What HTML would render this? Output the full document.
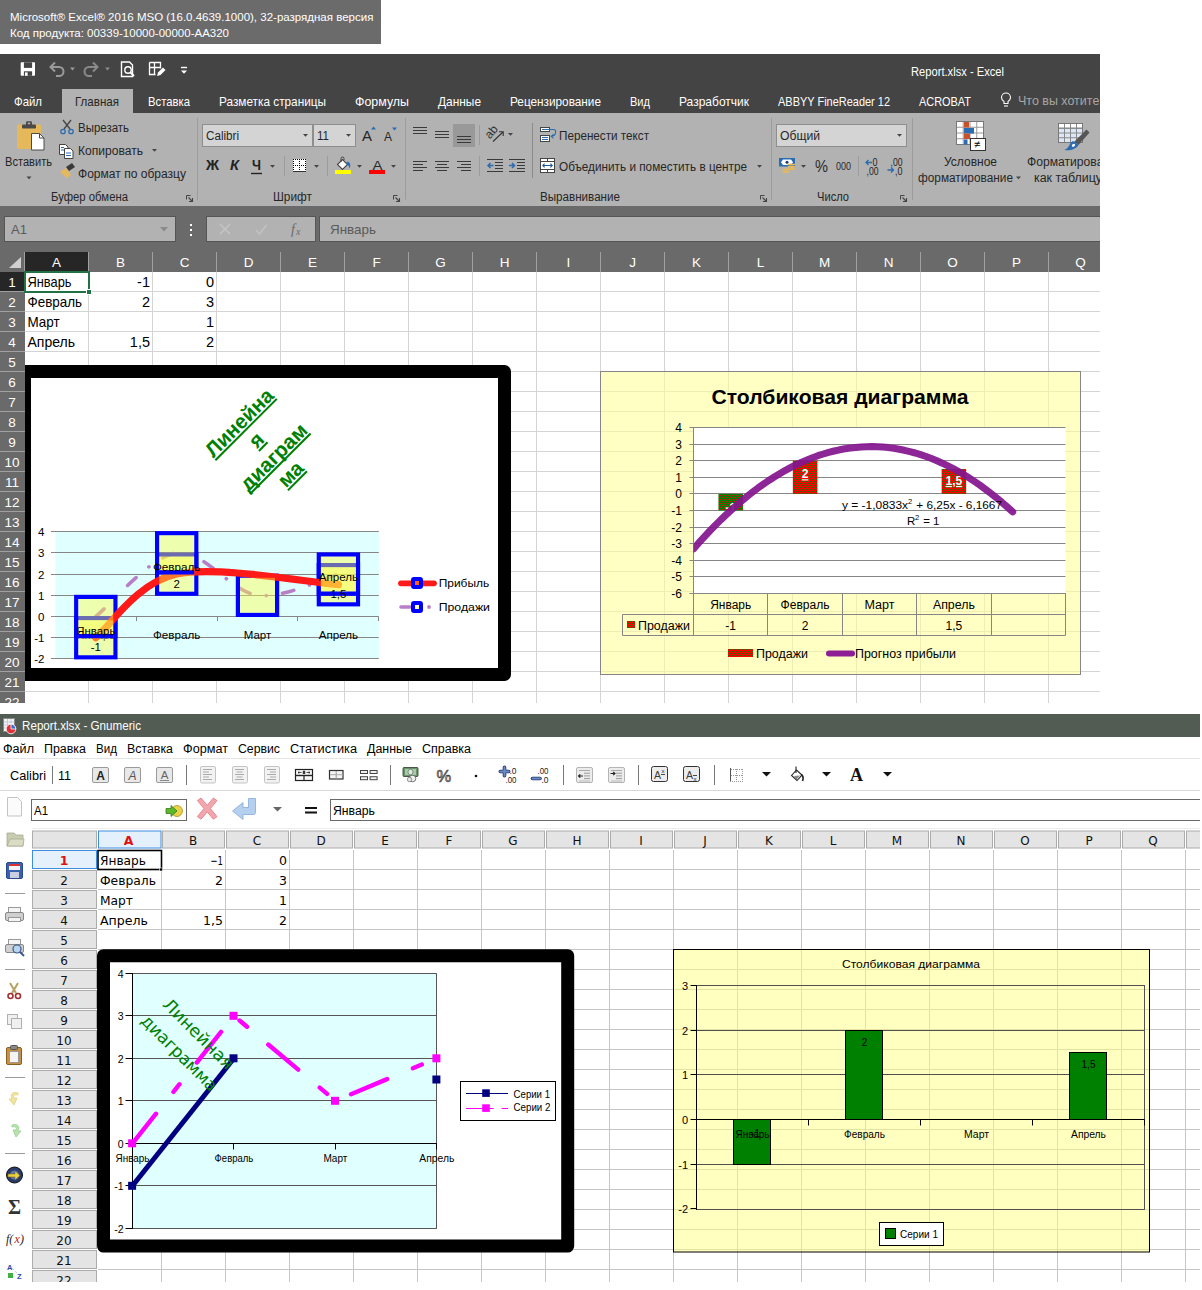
<!DOCTYPE html>
<html lang="ru"><head><meta charset="utf-8"><title>Report.xlsx</title>
<style>
html,body{margin:0;padding:0;background:#fff;}
body{width:1202px;height:1290px;position:relative;overflow:hidden;font-family:"Liberation Sans", sans-serif;}
#ver{position:absolute;left:0;top:0;width:381px;height:44px;background:#6b6b6b;color:#fff;font-size:11.5px;line-height:16px;box-sizing:border-box;padding:9px 0 0 10px;white-space:nowrap;}
#excel{position:absolute;left:0;top:54px;width:1100px;height:649px;overflow:hidden;}
#gnumeric{position:absolute;left:0;top:714px;width:1200px;height:568px;overflow:hidden;}
svg{display:block;}
text{white-space:pre;}
</style></head><body>
<div id="ver"><div>Microsoft® Excel® 2016 MSO (16.0.4639.1000), 32-разрядная версия</div><div>Код продукта: 00339-10000-00000-AA320</div></div>
<div id="excel"><svg width="1100" height="649" viewBox="0 54 1100 649">
<rect x="0" y="54" width="1100" height="59" fill="#444444" />
<rect x="20.7" y="62.3" width="14.3" height="13.5" fill="#fff" rx="0.800"/>
<rect x="23.9" y="62.3" width="8.2" height="5.6" fill="#444" />
<rect x="23.9" y="71.3" width="8.2" height="4.5" fill="#444" />
<rect x="25" y="72.4" width="2.6" height="3.4" fill="#fff" />
<path d="M51 67h8a4.500 4.500 0 0 1 0 9h-3" fill="none" stroke="#9a9a9a" stroke-width="2" />
<path d="M55 62.500l-4.500 4.500l4.500 4.500" fill="none" stroke="#9a9a9a" stroke-width="2" />
<path d="M70 67.500h5l-2.500 3z" fill="#9a9a9a" />
<path d="M97 67h-8a4.500 4.500 0 0 0 0 9h3" fill="none" stroke="#8a8a8a" stroke-width="2" />
<path d="M93 62.500l4.500 4.500l-4.500 4.500" fill="none" stroke="#8a8a8a" stroke-width="2" />
<path d="M105 67.500h5l-2.500 3z" fill="#8a8a8a" />
<path d="M121.5 62h8l3 3v11.5h-11z" fill="none" stroke="#fff" stroke-width="1.4" />
<circle cx="128" cy="70" r="3.2" fill="none" stroke="#fff" stroke-width="1.4"/>
<line x1="130.5" y1="72.5" x2="134" y2="76" stroke="#fff" stroke-width="1.8" />
<path d="M149.500 62.500h11v6 M149.500 62.500v12h6 M149.500 67.500h11 M154.500 62.500v12" fill="none" stroke="#fff" stroke-width="1.3" />
<path d="M157 76l1-3.500l5-5l2.500 2.500l-5 5z" fill="#fff" />
<line x1="181" y1="67.5" x2="187" y2="67.5" stroke="#fff" stroke-width="1.4" />
<path d="M181 70.500h6l-3 3.200z" fill="#fff" />
<text x="911" y="76" font-size="12" fill="#fff" font-family='"Liberation Sans", sans-serif' textLength="93" lengthAdjust="spacingAndGlyphs" >Report.xlsx - Excel</text>
<rect x="62" y="89" width="71" height="24" fill="#b2b2b2" />
<text x="14" y="105.5" font-size="13" fill="#fff" font-family='"Liberation Sans", sans-serif' textLength="28" lengthAdjust="spacingAndGlyphs" >Файл</text>
<text x="75" y="105.5" font-size="13" fill="#262626" font-family='"Liberation Sans", sans-serif' textLength="44" lengthAdjust="spacingAndGlyphs" >Главная</text>
<text x="148" y="105.5" font-size="13" fill="#fff" font-family='"Liberation Sans", sans-serif' textLength="42" lengthAdjust="spacingAndGlyphs" >Вставка</text>
<text x="219" y="105.5" font-size="13" fill="#fff" font-family='"Liberation Sans", sans-serif' textLength="107" lengthAdjust="spacingAndGlyphs" >Разметка страницы</text>
<text x="355" y="105.5" font-size="13" fill="#fff" font-family='"Liberation Sans", sans-serif' textLength="54" lengthAdjust="spacingAndGlyphs" >Формулы</text>
<text x="438" y="105.5" font-size="13" fill="#fff" font-family='"Liberation Sans", sans-serif' textLength="43" lengthAdjust="spacingAndGlyphs" >Данные</text>
<text x="510" y="105.5" font-size="13" fill="#fff" font-family='"Liberation Sans", sans-serif' textLength="91" lengthAdjust="spacingAndGlyphs" >Рецензирование</text>
<text x="630" y="105.5" font-size="13" fill="#fff" font-family='"Liberation Sans", sans-serif' textLength="20" lengthAdjust="spacingAndGlyphs" >Вид</text>
<text x="679" y="105.5" font-size="13" fill="#fff" font-family='"Liberation Sans", sans-serif' textLength="70" lengthAdjust="spacingAndGlyphs" >Разработчик</text>
<text x="778" y="105.5" font-size="13" fill="#fff" font-family='"Liberation Sans", sans-serif' textLength="112" lengthAdjust="spacingAndGlyphs" >ABBYY FineReader 12</text>
<text x="919" y="105.5" font-size="13" fill="#fff" font-family='"Liberation Sans", sans-serif' textLength="52" lengthAdjust="spacingAndGlyphs" >ACROBAT</text>
<g fill="none" stroke="#fff" stroke-width="1.1"><path d="M1004 103.500v-2c-1.500-1-2.500-2.300-2.500-4a4.500 4.500 0 0 1 9 0c0 1.700-1 3-2.500 4v2z"/><path d="M1004 106h4"/></g>
<clipPath id="xclip"><rect x="0" y="54" width="1100" height="649"/></clipPath>
<text x="1018" y="105" font-size="13" fill="#a6a6a6" font-family='"Liberation Sans", sans-serif' textLength="131" lengthAdjust="spacingAndGlyphs" clip-path="url(#xclip)">Что вы хотите сделать</text>
<rect x="0" y="113" width="1100" height="93" fill="#b2b2b2" />
<line x1="197.5" y1="118" x2="197.5" y2="200" stroke="#9c9c9c" stroke-width="1" />
<line x1="405.5" y1="118" x2="405.5" y2="200" stroke="#9c9c9c" stroke-width="1" />
<line x1="771.5" y1="118" x2="771.5" y2="200" stroke="#9c9c9c" stroke-width="1" />
<line x1="912.5" y1="118" x2="912.5" y2="200" stroke="#9c9c9c" stroke-width="1" />
<line x1="532.5" y1="123" x2="532.5" y2="178" stroke="#8c8c8c" stroke-width="1" />
<line x1="327.5" y1="156" x2="327.5" y2="176" stroke="#9c9c9c" stroke-width="1" />
<line x1="284.5" y1="156" x2="284.5" y2="176" stroke="#9c9c9c" stroke-width="1" />
<line x1="479.5" y1="125" x2="479.5" y2="145" stroke="#9c9c9c" stroke-width="1" />
<line x1="479.5" y1="156" x2="479.5" y2="176" stroke="#9c9c9c" stroke-width="1" />
<line x1="858.5" y1="156" x2="858.5" y2="176" stroke="#9c9c9c" stroke-width="1" />
<rect x="17" y="124.5" width="24" height="24.5" fill="#e6b85c" rx="1.500"/>
<rect x="22" y="124.5" width="14" height="4" fill="#4a4a4a" rx="1"/>
<rect x="26" y="121.3" width="6" height="4.5" fill="#4a4a4a" rx="1.200"/>
<rect x="27.8" y="122.6" width="2.4" height="1.6" fill="#b2b2b2" />
<path d="M31.500 133.500h8l4.500 4.500v12h-12.500z" fill="#fff" stroke="#4a4a4a" stroke-width="1" />
<path d="M39.500 133.500v4.500h4.500" fill="none" stroke="#4a4a4a" stroke-width="1" />
<text x="5" y="165.5" font-size="12.5" fill="#262626" font-family='"Liberation Sans", sans-serif' textLength="47" lengthAdjust="spacingAndGlyphs" >Вставить</text>
<path d="M26.500 176.500h5l-2.500 2.800z" fill="#444" />
<path d="M63 120l7 9 M71 120l-7 9" fill="none" stroke="#444" stroke-width="1.3" />
<circle cx="63" cy="131.500" r="2.200" fill="none" stroke="#2b6cb0" stroke-width="1.300"/><circle cx="71" cy="131.500" r="2.200" fill="none" stroke="#2b6cb0" stroke-width="1.300"/>
<text x="78" y="131.5" font-size="12.5" fill="#262626" font-family='"Liberation Sans", sans-serif' textLength="51" lengthAdjust="spacingAndGlyphs" >Вырезать</text>
<path d="M59.500 144.500h6l2.500 2.500v7.500h-8.500z" fill="#fff" stroke="#444" stroke-width="1" />
<path d="M64.500 148.500h6l2.500 2.500v7.500h-8.500z" fill="#fff" stroke="#444" stroke-width="1" />
<path d="M61 147.500h3 M61 150h3 M66 153h5 M66 155.500h5" fill="none" stroke="#2b6cb0" stroke-width="1" />
<text x="78" y="154.5" font-size="12.5" fill="#262626" font-family='"Liberation Sans", sans-serif' textLength="65" lengthAdjust="spacingAndGlyphs" >Копировать</text>
<path d="M152 149h5l-2.500 2.800z" fill="#444" />
<path d="M60 172l6-4l5 7l-4 3z" fill="#e6b85c" />
<path d="M66 167l6-4l3 4l-6 4z" fill="#3a3a3a" />
<text x="78" y="177.5" font-size="12.5" fill="#262626" font-family='"Liberation Sans", sans-serif' textLength="108" lengthAdjust="spacingAndGlyphs" >Формат по образцу</text>
<text x="51" y="201.2" font-size="12" fill="#262626" font-family='"Liberation Sans", sans-serif' textLength="77" lengthAdjust="spacingAndGlyphs" >Буфер обмена</text>
<path d="M186.5 199.5v-4h4" fill="none" stroke="#444" stroke-width="1" />
<path d="M188.5 197.5l3.500 3.500 M192.5 198v3.500h-3.500" fill="none" stroke="#444" stroke-width="1.1" />
<rect x="202.5" y="124.5" width="110" height="22" fill="#d4d4d4" stroke="#8e8e8e" stroke-width="1" />
<rect x="313.5" y="124.5" width="42" height="22" fill="#d4d4d4" stroke="#8e8e8e" stroke-width="1" />
<text x="206" y="139.5" font-size="12.5" fill="#262626" font-family='"Liberation Sans", sans-serif' textLength="33" lengthAdjust="spacingAndGlyphs" >Calibri</text>
<text x="317" y="139.5" font-size="12.5" fill="#262626" font-family='"Liberation Sans", sans-serif' textLength="12" lengthAdjust="spacingAndGlyphs" >11</text>
<path d="M303 134h5l-2.500 2.800z" fill="#444" />
<path d="M346 134h5l-2.500 2.800z" fill="#444" />
<text x="362" y="141" font-size="15" fill="#262626" font-family='"Liberation Sans", sans-serif' textLength="10" lengthAdjust="spacingAndGlyphs" >A</text>
<path d="M371 129.500l2.500-3l2.500 3z" fill="#2b6cb0" />
<text x="384" y="140.5" font-size="12" fill="#262626" font-family='"Liberation Sans", sans-serif' textLength="8" lengthAdjust="spacingAndGlyphs" >A</text>
<path d="M392 127.500h5l-2.500 3z" fill="#2b6cb0" />
<text x="206" y="170" font-size="14" fill="#222" font-family='"Liberation Sans", sans-serif' font-weight="bold" textLength="13" lengthAdjust="spacingAndGlyphs" >Ж</text>
<text x="230" y="170" font-size="14" fill="#222" font-family='"Liberation Sans", sans-serif' font-weight="bold" font-style="italic" textLength="9" lengthAdjust="spacingAndGlyphs" >К</text>
<text x="252" y="170" font-size="14" fill="#222" font-family='"Liberation Sans", sans-serif' font-weight="bold" textLength="9" lengthAdjust="spacingAndGlyphs" >Ч</text>
<line x1="251" y1="173.5" x2="262" y2="173.5" stroke="#222" stroke-width="1.4" />
<path d="M270 165h5l-2.500 2.800z" fill="#444" />
<rect x="293" y="159" width="13" height="13" fill="#fff" />
<g shape-rendering="crispEdges" stroke="#333" stroke-width="1" stroke-dasharray="1 1">
<line x1="293.5" y1="159" x2="293.5" y2="171" stroke="#000" stroke-width="1" />
<line x1="305.5" y1="159" x2="305.5" y2="171" stroke="#000" stroke-width="1" />
<line x1="299.5" y1="159" x2="299.5" y2="171" stroke="#000" stroke-width="1" />
<line x1="293" y1="159.5" x2="306" y2="159.5" stroke="#000" stroke-width="1" />
<line x1="293" y1="165.5" x2="306" y2="165.5" stroke="#000" stroke-width="1" />
</g>
<line x1="293" y1="171.5" x2="306" y2="171.5" stroke="#333" stroke-width="1" shape-rendering="crispEdges"/>
<path d="M314 165h5l-2.500 2.800z" fill="#444" />
<path d="M337.500 164.500l5-5l5 5l-5 5z" fill="#fff" stroke="#444" stroke-width="1.1" />
<path d="M341 162v-3.500a1.500 1.500 0 0 1 3 0v1.500" fill="none" stroke="#444" stroke-width="1" />
<path d="M347.500 161.500c3 1 3.500 4 2 7c-0.500-2.500-1.500-4-3.500-5z" fill="#2b6cb0" />
<rect x="335" y="170" width="16" height="4" fill="#ffff00" />
<path d="M357 165h5l-2.500 2.800z" fill="#444" />
<text x="372.5" y="169.5" font-size="13.5" fill="#2a2a2a" font-family='"Liberation Sans", sans-serif' textLength="10" lengthAdjust="spacingAndGlyphs" >A</text>
<rect x="369" y="170" width="16" height="4" fill="#ff0000" />
<path d="M391 165h5l-2.500 2.800z" fill="#444" />
<text x="273" y="201.2" font-size="12" fill="#262626" font-family='"Liberation Sans", sans-serif' textLength="39" lengthAdjust="spacingAndGlyphs" >Шрифт</text>
<path d="M393.5 199.5v-4h4" fill="none" stroke="#444" stroke-width="1" />
<path d="M395.5 197.5l3.500 3.500 M399.5 198v3.500h-3.500" fill="none" stroke="#444" stroke-width="1.1" />
<rect x="453" y="124" width="22" height="23" fill="#999999" />
<line x1="413" y1="127.5" x2="427" y2="127.5" stroke="#3a3a3a" stroke-width="1" />
<line x1="413" y1="130.5" x2="427" y2="130.5" stroke="#3a3a3a" stroke-width="1" />
<line x1="413" y1="133.5" x2="427" y2="133.5" stroke="#3a3a3a" stroke-width="1" />
<line x1="435" y1="131.5" x2="449" y2="131.5" stroke="#3a3a3a" stroke-width="1" />
<line x1="435" y1="134.5" x2="449" y2="134.5" stroke="#3a3a3a" stroke-width="1" />
<line x1="435" y1="137.5" x2="449" y2="137.5" stroke="#3a3a3a" stroke-width="1" />
<line x1="457" y1="136.5" x2="471" y2="136.5" stroke="#3a3a3a" stroke-width="1" />
<line x1="457" y1="139.5" x2="471" y2="139.5" stroke="#3a3a3a" stroke-width="1" />
<line x1="457" y1="142.5" x2="471" y2="142.5" stroke="#3a3a3a" stroke-width="1" />
<line x1="413" y1="161.5" x2="427" y2="161.5" stroke="#3a3a3a" stroke-width="1" />
<line x1="413" y1="164.5" x2="423" y2="164.5" stroke="#3a3a3a" stroke-width="1" />
<line x1="413" y1="167.5" x2="427" y2="167.5" stroke="#3a3a3a" stroke-width="1" />
<line x1="413" y1="170.5" x2="423" y2="170.5" stroke="#3a3a3a" stroke-width="1" />
<line x1="435" y1="161.5" x2="449" y2="161.5" stroke="#3a3a3a" stroke-width="1" />
<line x1="437" y1="164.5" x2="447" y2="164.5" stroke="#3a3a3a" stroke-width="1" />
<line x1="435" y1="167.5" x2="449" y2="167.5" stroke="#3a3a3a" stroke-width="1" />
<line x1="437" y1="170.5" x2="447" y2="170.5" stroke="#3a3a3a" stroke-width="1" />
<line x1="457" y1="161.5" x2="471" y2="161.5" stroke="#3a3a3a" stroke-width="1" />
<line x1="461" y1="164.5" x2="471" y2="164.5" stroke="#3a3a3a" stroke-width="1" />
<line x1="457" y1="167.5" x2="471" y2="167.5" stroke="#3a3a3a" stroke-width="1" />
<line x1="461" y1="170.5" x2="471" y2="170.5" stroke="#3a3a3a" stroke-width="1" />
<text x="0" y="0" font-size="12" fill="#333" font-family='"Liberation Sans", sans-serif' transform="translate(490 139.500) rotate(-50)">ab</text>
<path d="M493 141.500l10-9.500 M499 131.800h4.200v4.200" fill="none" stroke="#333" stroke-width="1.1" />
<path d="M508 133h5l-2.500 2.800z" fill="#444" />
<line x1="487" y1="159.5" x2="503" y2="159.5" stroke="#3a3a3a" stroke-width="1" />
<line x1="495" y1="162.5" x2="503" y2="162.5" stroke="#3a3a3a" stroke-width="1" />
<line x1="495" y1="165.5" x2="503" y2="165.5" stroke="#3a3a3a" stroke-width="1" />
<line x1="495" y1="168.5" x2="503" y2="168.5" stroke="#3a3a3a" stroke-width="1" />
<line x1="487" y1="171.5" x2="503" y2="171.5" stroke="#3a3a3a" stroke-width="1" />
<path d="M493.5 165.500h-5.500 M490.5 163l-2.500 2.500l2.500 2.500" fill="none" stroke="#2b6cb0" stroke-width="1.5" />
<line x1="509" y1="159.5" x2="525" y2="159.5" stroke="#3a3a3a" stroke-width="1" />
<line x1="517" y1="162.5" x2="525" y2="162.5" stroke="#3a3a3a" stroke-width="1" />
<line x1="517" y1="165.5" x2="525" y2="165.5" stroke="#3a3a3a" stroke-width="1" />
<line x1="517" y1="168.5" x2="525" y2="168.5" stroke="#3a3a3a" stroke-width="1" />
<line x1="509" y1="171.5" x2="525" y2="171.5" stroke="#3a3a3a" stroke-width="1" />
<path d="M509 165.500h5.500 M512 163l2.500 2.500l-2.500 2.500" fill="none" stroke="#2b6cb0" stroke-width="1.5" />
<rect x="540.5" y="127.5" width="9" height="4" fill="#fff" stroke="#444" stroke-width="1" />
<rect x="540.5" y="135.5" width="9" height="6" fill="#fff" stroke="#444" stroke-width="1" />
<line x1="542" y1="129.5" x2="554" y2="129.5" stroke="#2b6cb0" stroke-width="1" />
<line x1="542" y1="137.5" x2="548" y2="137.5" stroke="#2b6cb0" stroke-width="1" />
<line x1="542" y1="139.5" x2="548" y2="139.5" stroke="#2b6cb0" stroke-width="1" />
<path d="M554 129.500c2.500 0.500 2.500 6.500-2.500 6.800 M553.500 134.300l-2.300 2l2.300 2" fill="none" stroke="#2b6cb0" stroke-width="1.1" />
<text x="559" y="139.5" font-size="12.5" fill="#262626" font-family='"Liberation Sans", sans-serif' textLength="90" lengthAdjust="spacingAndGlyphs" >Перенести текст</text>
<rect x="540.5" y="158.5" width="14" height="14" fill="#fff" stroke="#444" stroke-width="1" />
<line x1="541" y1="161.5" x2="554" y2="161.5" stroke="#444" stroke-width="1" />
<line x1="541" y1="169.5" x2="554" y2="169.5" stroke="#444" stroke-width="1" />
<line x1="547.5" y1="159" x2="547.5" y2="161" stroke="#444" stroke-width="1" />
<line x1="547.5" y1="170" x2="547.5" y2="172" stroke="#444" stroke-width="1" />
<path d="M542.800 165.500h9.400 M544.600 163.700l-1.800 1.800l1.800 1.800 M550.400 163.700l1.800 1.800l-1.800 1.800" fill="none" stroke="#1e5a9a" stroke-width="1.1" />
<text x="559" y="170.5" font-size="12.5" fill="#262626" font-family='"Liberation Sans", sans-serif' textLength="188" lengthAdjust="spacingAndGlyphs" >Объединить и поместить в центре</text>
<path d="M757 165h5l-2.500 2.800z" fill="#444" />
<text x="540" y="201.2" font-size="12" fill="#262626" font-family='"Liberation Sans", sans-serif' textLength="80" lengthAdjust="spacingAndGlyphs" >Выравнивание</text>
<path d="M760.5 199.5v-4h4" fill="none" stroke="#444" stroke-width="1" />
<path d="M762.5 197.5l3.500 3.500 M766.5 198v3.500h-3.500" fill="none" stroke="#444" stroke-width="1.1" />
<rect x="776.5" y="124.5" width="130" height="22" fill="#d4d4d4" stroke="#8e8e8e" stroke-width="1" />
<text x="780" y="139.5" font-size="12.5" fill="#262626" font-family='"Liberation Sans", sans-serif' textLength="40" lengthAdjust="spacingAndGlyphs" >Общий</text>
<path d="M897 134h5l-2.500 2.800z" fill="#444" />
<rect x="779" y="158" width="16" height="8.5" fill="#2b6cb0" />
<path d="M781 162.200l2-2.700h8l2 2.700l-2 2.700h-8z" fill="#fff"/><circle cx="787" cy="162.200" r="1.500" fill="#1e3c6e"/>
<ellipse cx="791.5" cy="164.5" rx="3.800" ry="1" fill="#e6b85c"/>
<ellipse cx="791.5" cy="166.7" rx="3.800" ry="1" fill="#e6b85c"/>
<ellipse cx="791.5" cy="168.9" rx="3.800" ry="1" fill="#e6b85c"/>
<ellipse cx="786" cy="169.5" rx="3.800" ry="1" fill="#e6b85c"/>
<ellipse cx="786" cy="171.7" rx="3.800" ry="1" fill="#e6b85c"/>
<path d="M801 165h5l-2.500 2.800z" fill="#444" />
<text x="815" y="172" font-size="16" fill="#2a2a2a" font-family='"Liberation Sans", sans-serif' textLength="13" lengthAdjust="spacingAndGlyphs" >%</text>
<text x="836" y="170" font-size="10.5" fill="#2a2a2a" font-family='"Liberation Sans", sans-serif' textLength="15" lengthAdjust="spacingAndGlyphs" >000</text>
<text x="872.5" y="166" font-size="10" fill="#222" font-family='"Liberation Sans", sans-serif' textLength="5" lengthAdjust="spacingAndGlyphs" >0</text>
<text x="866.5" y="174.5" font-size="10" fill="#222" font-family='"Liberation Sans", sans-serif' textLength="12" lengthAdjust="spacingAndGlyphs" >,00</text>
<path d="M872 162.500h-6 M868.500 160l-2.500 2.500l2.500 2.500" fill="none" stroke="#2b6cb0" stroke-width="1.3" />
<text x="890.5" y="166" font-size="10" fill="#222" font-family='"Liberation Sans", sans-serif' textLength="12" lengthAdjust="spacingAndGlyphs" >,00</text>
<text x="895" y="174.5" font-size="10" fill="#222" font-family='"Liberation Sans", sans-serif' textLength="7.5" lengthAdjust="spacingAndGlyphs" >,0</text>
<path d="M887.500 170h6 M891 167.500l2.500 2.500l-2.500 2.500" fill="none" stroke="#2b6cb0" stroke-width="1.3" />
<text x="817" y="201.2" font-size="12" fill="#262626" font-family='"Liberation Sans", sans-serif' textLength="32" lengthAdjust="spacingAndGlyphs" >Число</text>
<path d="M900.5 199.5v-4h4" fill="none" stroke="#444" stroke-width="1" />
<path d="M902.5 197.5l3.500 3.500 M906.5 198v3.500h-3.500" fill="none" stroke="#444" stroke-width="1.1" />
<rect x="956.5" y="121.5" width="27" height="23" fill="#fff" stroke="#777" stroke-width="1" />
<line x1="957" y1="127.25" x2="983" y2="127.25" stroke="#999" stroke-width="1" />
<line x1="957" y1="133.0" x2="983" y2="133.0" stroke="#999" stroke-width="1" />
<line x1="957" y1="138.75" x2="983" y2="138.75" stroke="#999" stroke-width="1" />
<line x1="963.25" y1="122" x2="963.25" y2="144" stroke="#999" stroke-width="1" />
<line x1="970.0" y1="122" x2="970.0" y2="144" stroke="#999" stroke-width="1" />
<line x1="976.75" y1="122" x2="976.75" y2="144" stroke="#999" stroke-width="1" />
<rect x="964" y="122" width="5" height="5.5" fill="#c8502a" />
<rect x="964" y="128" width="10" height="5.5" fill="#2b6cb0" />
<rect x="964" y="133.5" width="6" height="5.5" fill="#c8502a" />
<rect x="964" y="139.5" width="3.5" height="5" fill="#2b6cb0" />
<rect x="970.5" y="138.5" width="15" height="12" fill="#fff" stroke="#333" stroke-width="1" />
<text x="974" y="147.5" font-size="11" fill="#000" font-family='"Liberation Sans", sans-serif' >≠</text>
<text x="944" y="165.5" font-size="12.5" fill="#262626" font-family='"Liberation Sans", sans-serif' textLength="53" lengthAdjust="spacingAndGlyphs" >Условное</text>
<text x="918" y="181.5" font-size="12.5" fill="#262626" font-family='"Liberation Sans", sans-serif' textLength="95" lengthAdjust="spacingAndGlyphs" >форматирование</text>
<path d="M1016 176.500h5l-2.500 2.800z" fill="#444" />
<g clip-path="url(#xclip)">
<rect x="1058.5" y="123.5" width="24" height="19" fill="#dbe7f5" stroke="#777" stroke-width="1" />
<rect x="1058.5" y="123.5" width="24" height="4.7" fill="#fff" stroke="#777" stroke-width="1" />
<line x1="1059" y1="128.25" x2="1082" y2="128.25" stroke="#888" stroke-width="1" />
<line x1="1059" y1="133.0" x2="1082" y2="133.0" stroke="#888" stroke-width="1" />
<line x1="1059" y1="137.75" x2="1082" y2="137.75" stroke="#888" stroke-width="1" />
<line x1="1064.5" y1="124" x2="1064.5" y2="142" stroke="#888" stroke-width="1" />
<line x1="1070.5" y1="124" x2="1070.5" y2="142" stroke="#888" stroke-width="1" />
<line x1="1076.5" y1="124" x2="1076.5" y2="142" stroke="#888" stroke-width="1" />
<path d="M1086.500 129.500L1089.500 132.500L1078.500 145L1074.500 141.500Z" fill="#555" />
<path d="M1074.500 141.500L1078.500 145C1076.500 149 1070 151 1064.500 150C1068 148.500 1069 145.500 1070.500 143C1071.500 141.500 1073 141 1074.500 141.500Z" fill="#2b6cb0" />
<ellipse cx="1073.500" cy="145.300" rx="1.800" ry="1.300" fill="#fff" transform="rotate(-40 1073.500 145.300)"/>
<text x="1027" y="165.5" font-size="12.5" fill="#262626" font-family='"Liberation Sans", sans-serif' textLength="88" lengthAdjust="spacingAndGlyphs" >Форматировать</text>
<text x="1034" y="181.5" font-size="12.5" fill="#262626" font-family='"Liberation Sans", sans-serif' textLength="68" lengthAdjust="spacingAndGlyphs" >как таблицу</text>
</g>
<rect x="0" y="206" width="1100" height="66" fill="#6a6a6a" />
<rect x="4.5" y="216.5" width="171" height="25" fill="#b2b2b2" stroke="#555" stroke-width="1" />
<text x="11" y="234" font-size="13.5" fill="#5a5a5a" font-family='"Liberation Sans", sans-serif' textLength="16" lengthAdjust="spacingAndGlyphs" >A1</text>
<path d="M160 227h8l-4 4.500z" fill="#8a8a8a" />
<rect x="190" y="224" width="2" height="2" fill="#fff" />
<rect x="190" y="229" width="2" height="2" fill="#fff" />
<rect x="190" y="234" width="2" height="2" fill="#fff" />
<rect x="206.5" y="216.5" width="109" height="25" fill="#b2b2b2" stroke="#555" stroke-width="1" />
<path d="M220 224l10 10 M230 224l-10 10" fill="none" stroke="#c4c4c4" stroke-width="1.6" />
<path d="M256 230l3.500 4l7-9" fill="none" stroke="#c0c0c0" stroke-width="1.8" />
<text x="291" y="234" font-size="14" fill="#6a6a6a" font-family='"Liberation Serif", serif' font-style="italic" >f</text>
<text x="296" y="235" font-size="10" fill="#6a6a6a" font-family='"Liberation Serif", serif' font-style="italic" >x</text>
<rect x="319.5" y="216.5" width="790" height="25" fill="#b2b2b2" stroke="#555" stroke-width="1" clip-path="url(#xclip)"/>
<text x="330" y="234" font-size="13.5" fill="#5a5a5a" font-family='"Liberation Sans", sans-serif' textLength="46" lengthAdjust="spacingAndGlyphs" >Январь</text>
<rect x="0" y="272" width="1100" height="431" fill="#fff" />
<line x1="88.5" y1="272" x2="88.5" y2="703" stroke="#d4d4d4" stroke-width="1" />
<line x1="152.5" y1="272" x2="152.5" y2="703" stroke="#d4d4d4" stroke-width="1" />
<line x1="216.5" y1="272" x2="216.5" y2="703" stroke="#d4d4d4" stroke-width="1" />
<line x1="280.5" y1="272" x2="280.5" y2="703" stroke="#d4d4d4" stroke-width="1" />
<line x1="344.5" y1="272" x2="344.5" y2="703" stroke="#d4d4d4" stroke-width="1" />
<line x1="408.5" y1="272" x2="408.5" y2="703" stroke="#d4d4d4" stroke-width="1" />
<line x1="472.5" y1="272" x2="472.5" y2="703" stroke="#d4d4d4" stroke-width="1" />
<line x1="536.5" y1="272" x2="536.5" y2="703" stroke="#d4d4d4" stroke-width="1" />
<line x1="600.5" y1="272" x2="600.5" y2="703" stroke="#d4d4d4" stroke-width="1" />
<line x1="664.5" y1="272" x2="664.5" y2="703" stroke="#d4d4d4" stroke-width="1" />
<line x1="728.5" y1="272" x2="728.5" y2="703" stroke="#d4d4d4" stroke-width="1" />
<line x1="792.5" y1="272" x2="792.5" y2="703" stroke="#d4d4d4" stroke-width="1" />
<line x1="856.5" y1="272" x2="856.5" y2="703" stroke="#d4d4d4" stroke-width="1" />
<line x1="920.5" y1="272" x2="920.5" y2="703" stroke="#d4d4d4" stroke-width="1" />
<line x1="984.5" y1="272" x2="984.5" y2="703" stroke="#d4d4d4" stroke-width="1" />
<line x1="1048.5" y1="272" x2="1048.5" y2="703" stroke="#d4d4d4" stroke-width="1" />
<line x1="25" y1="291.5" x2="1100" y2="291.5" stroke="#d4d4d4" stroke-width="1" />
<line x1="25" y1="311.5" x2="1100" y2="311.5" stroke="#d4d4d4" stroke-width="1" />
<line x1="25" y1="331.5" x2="1100" y2="331.5" stroke="#d4d4d4" stroke-width="1" />
<line x1="25" y1="351.5" x2="1100" y2="351.5" stroke="#d4d4d4" stroke-width="1" />
<line x1="25" y1="371.5" x2="1100" y2="371.5" stroke="#d4d4d4" stroke-width="1" />
<line x1="25" y1="391.5" x2="1100" y2="391.5" stroke="#d4d4d4" stroke-width="1" />
<line x1="25" y1="411.5" x2="1100" y2="411.5" stroke="#d4d4d4" stroke-width="1" />
<line x1="25" y1="431.5" x2="1100" y2="431.5" stroke="#d4d4d4" stroke-width="1" />
<line x1="25" y1="451.5" x2="1100" y2="451.5" stroke="#d4d4d4" stroke-width="1" />
<line x1="25" y1="471.5" x2="1100" y2="471.5" stroke="#d4d4d4" stroke-width="1" />
<line x1="25" y1="491.5" x2="1100" y2="491.5" stroke="#d4d4d4" stroke-width="1" />
<line x1="25" y1="511.5" x2="1100" y2="511.5" stroke="#d4d4d4" stroke-width="1" />
<line x1="25" y1="531.5" x2="1100" y2="531.5" stroke="#d4d4d4" stroke-width="1" />
<line x1="25" y1="551.5" x2="1100" y2="551.5" stroke="#d4d4d4" stroke-width="1" />
<line x1="25" y1="571.5" x2="1100" y2="571.5" stroke="#d4d4d4" stroke-width="1" />
<line x1="25" y1="591.5" x2="1100" y2="591.5" stroke="#d4d4d4" stroke-width="1" />
<line x1="25" y1="611.5" x2="1100" y2="611.5" stroke="#d4d4d4" stroke-width="1" />
<line x1="25" y1="631.5" x2="1100" y2="631.5" stroke="#d4d4d4" stroke-width="1" />
<line x1="25" y1="651.5" x2="1100" y2="651.5" stroke="#d4d4d4" stroke-width="1" />
<line x1="25" y1="671.5" x2="1100" y2="671.5" stroke="#d4d4d4" stroke-width="1" />
<line x1="25" y1="691.5" x2="1100" y2="691.5" stroke="#d4d4d4" stroke-width="1" />
<rect x="0" y="252" width="1100" height="20" fill="#6a6a6a" />
<rect x="25" y="252" width="64" height="19.5" fill="#262626" />
<path d="M21 257v11h-12z" fill="#d0d0d0" />
<line x1="88.5" y1="252" x2="88.5" y2="272" stroke="#a0a0a0" stroke-width="1" />
<line x1="152.5" y1="252" x2="152.5" y2="272" stroke="#a0a0a0" stroke-width="1" />
<line x1="216.5" y1="252" x2="216.5" y2="272" stroke="#a0a0a0" stroke-width="1" />
<line x1="280.5" y1="252" x2="280.5" y2="272" stroke="#a0a0a0" stroke-width="1" />
<line x1="344.5" y1="252" x2="344.5" y2="272" stroke="#a0a0a0" stroke-width="1" />
<line x1="408.5" y1="252" x2="408.5" y2="272" stroke="#a0a0a0" stroke-width="1" />
<line x1="472.5" y1="252" x2="472.5" y2="272" stroke="#a0a0a0" stroke-width="1" />
<line x1="536.5" y1="252" x2="536.5" y2="272" stroke="#a0a0a0" stroke-width="1" />
<line x1="600.5" y1="252" x2="600.5" y2="272" stroke="#a0a0a0" stroke-width="1" />
<line x1="664.5" y1="252" x2="664.5" y2="272" stroke="#a0a0a0" stroke-width="1" />
<line x1="728.5" y1="252" x2="728.5" y2="272" stroke="#a0a0a0" stroke-width="1" />
<line x1="792.5" y1="252" x2="792.5" y2="272" stroke="#a0a0a0" stroke-width="1" />
<line x1="856.5" y1="252" x2="856.5" y2="272" stroke="#a0a0a0" stroke-width="1" />
<line x1="920.5" y1="252" x2="920.5" y2="272" stroke="#a0a0a0" stroke-width="1" />
<line x1="984.5" y1="252" x2="984.5" y2="272" stroke="#a0a0a0" stroke-width="1" />
<line x1="1048.5" y1="252" x2="1048.5" y2="272" stroke="#a0a0a0" stroke-width="1" />
<line x1="24.5" y1="252" x2="24.5" y2="272" stroke="#a0a0a0" stroke-width="1" />
<text x="56.5" y="267" font-size="13.5" fill="#fff" font-family='"Liberation Sans", sans-serif' text-anchor="middle" >A</text>
<text x="120.5" y="267" font-size="13.5" fill="#fff" font-family='"Liberation Sans", sans-serif' text-anchor="middle" >B</text>
<text x="184.5" y="267" font-size="13.5" fill="#fff" font-family='"Liberation Sans", sans-serif' text-anchor="middle" >C</text>
<text x="248.5" y="267" font-size="13.5" fill="#fff" font-family='"Liberation Sans", sans-serif' text-anchor="middle" >D</text>
<text x="312.5" y="267" font-size="13.5" fill="#fff" font-family='"Liberation Sans", sans-serif' text-anchor="middle" >E</text>
<text x="376.5" y="267" font-size="13.5" fill="#fff" font-family='"Liberation Sans", sans-serif' text-anchor="middle" >F</text>
<text x="440.5" y="267" font-size="13.5" fill="#fff" font-family='"Liberation Sans", sans-serif' text-anchor="middle" >G</text>
<text x="504.5" y="267" font-size="13.5" fill="#fff" font-family='"Liberation Sans", sans-serif' text-anchor="middle" >H</text>
<text x="568.5" y="267" font-size="13.5" fill="#fff" font-family='"Liberation Sans", sans-serif' text-anchor="middle" >I</text>
<text x="632.5" y="267" font-size="13.5" fill="#fff" font-family='"Liberation Sans", sans-serif' text-anchor="middle" >J</text>
<text x="696.5" y="267" font-size="13.5" fill="#fff" font-family='"Liberation Sans", sans-serif' text-anchor="middle" >K</text>
<text x="760.5" y="267" font-size="13.5" fill="#fff" font-family='"Liberation Sans", sans-serif' text-anchor="middle" >L</text>
<text x="824.5" y="267" font-size="13.5" fill="#fff" font-family='"Liberation Sans", sans-serif' text-anchor="middle" >M</text>
<text x="888.5" y="267" font-size="13.5" fill="#fff" font-family='"Liberation Sans", sans-serif' text-anchor="middle" >N</text>
<text x="952.5" y="267" font-size="13.5" fill="#fff" font-family='"Liberation Sans", sans-serif' text-anchor="middle" >O</text>
<text x="1016.5" y="267" font-size="13.5" fill="#fff" font-family='"Liberation Sans", sans-serif' text-anchor="middle" >P</text>
<text x="1080.5" y="267" font-size="13.5" fill="#fff" font-family='"Liberation Sans", sans-serif' text-anchor="middle" >Q</text>
<rect x="0" y="272" width="25" height="431" fill="#6a6a6a" />
<rect x="0" y="272" width="24.5" height="19.5" fill="#262626" />
<line x1="0" y1="291.5" x2="25" y2="291.5" stroke="#a0a0a0" stroke-width="1" />
<line x1="0" y1="311.5" x2="25" y2="311.5" stroke="#a0a0a0" stroke-width="1" />
<line x1="0" y1="331.5" x2="25" y2="331.5" stroke="#a0a0a0" stroke-width="1" />
<line x1="0" y1="351.5" x2="25" y2="351.5" stroke="#a0a0a0" stroke-width="1" />
<line x1="0" y1="371.5" x2="25" y2="371.5" stroke="#a0a0a0" stroke-width="1" />
<line x1="0" y1="391.5" x2="25" y2="391.5" stroke="#a0a0a0" stroke-width="1" />
<line x1="0" y1="411.5" x2="25" y2="411.5" stroke="#a0a0a0" stroke-width="1" />
<line x1="0" y1="431.5" x2="25" y2="431.5" stroke="#a0a0a0" stroke-width="1" />
<line x1="0" y1="451.5" x2="25" y2="451.5" stroke="#a0a0a0" stroke-width="1" />
<line x1="0" y1="471.5" x2="25" y2="471.5" stroke="#a0a0a0" stroke-width="1" />
<line x1="0" y1="491.5" x2="25" y2="491.5" stroke="#a0a0a0" stroke-width="1" />
<line x1="0" y1="511.5" x2="25" y2="511.5" stroke="#a0a0a0" stroke-width="1" />
<line x1="0" y1="531.5" x2="25" y2="531.5" stroke="#a0a0a0" stroke-width="1" />
<line x1="0" y1="551.5" x2="25" y2="551.5" stroke="#a0a0a0" stroke-width="1" />
<line x1="0" y1="571.5" x2="25" y2="571.5" stroke="#a0a0a0" stroke-width="1" />
<line x1="0" y1="591.5" x2="25" y2="591.5" stroke="#a0a0a0" stroke-width="1" />
<line x1="0" y1="611.5" x2="25" y2="611.5" stroke="#a0a0a0" stroke-width="1" />
<line x1="0" y1="631.5" x2="25" y2="631.5" stroke="#a0a0a0" stroke-width="1" />
<line x1="0" y1="651.5" x2="25" y2="651.5" stroke="#a0a0a0" stroke-width="1" />
<line x1="0" y1="671.5" x2="25" y2="671.5" stroke="#a0a0a0" stroke-width="1" />
<line x1="0" y1="691.5" x2="25" y2="691.5" stroke="#a0a0a0" stroke-width="1" />
<text x="12" y="287" font-size="13.5" fill="#fff" font-family='"Liberation Sans", sans-serif' text-anchor="middle" clip-path="url(#xclip)">1</text>
<text x="12" y="307" font-size="13.5" fill="#fff" font-family='"Liberation Sans", sans-serif' text-anchor="middle" clip-path="url(#xclip)">2</text>
<text x="12" y="327" font-size="13.5" fill="#fff" font-family='"Liberation Sans", sans-serif' text-anchor="middle" clip-path="url(#xclip)">3</text>
<text x="12" y="347" font-size="13.5" fill="#fff" font-family='"Liberation Sans", sans-serif' text-anchor="middle" clip-path="url(#xclip)">4</text>
<text x="12" y="367" font-size="13.5" fill="#fff" font-family='"Liberation Sans", sans-serif' text-anchor="middle" clip-path="url(#xclip)">5</text>
<text x="12" y="387" font-size="13.5" fill="#fff" font-family='"Liberation Sans", sans-serif' text-anchor="middle" clip-path="url(#xclip)">6</text>
<text x="12" y="407" font-size="13.5" fill="#fff" font-family='"Liberation Sans", sans-serif' text-anchor="middle" clip-path="url(#xclip)">7</text>
<text x="12" y="427" font-size="13.5" fill="#fff" font-family='"Liberation Sans", sans-serif' text-anchor="middle" clip-path="url(#xclip)">8</text>
<text x="12" y="447" font-size="13.5" fill="#fff" font-family='"Liberation Sans", sans-serif' text-anchor="middle" clip-path="url(#xclip)">9</text>
<text x="12" y="467" font-size="13.5" fill="#fff" font-family='"Liberation Sans", sans-serif' text-anchor="middle" clip-path="url(#xclip)">10</text>
<text x="12" y="487" font-size="13.5" fill="#fff" font-family='"Liberation Sans", sans-serif' text-anchor="middle" clip-path="url(#xclip)">11</text>
<text x="12" y="507" font-size="13.5" fill="#fff" font-family='"Liberation Sans", sans-serif' text-anchor="middle" clip-path="url(#xclip)">12</text>
<text x="12" y="527" font-size="13.5" fill="#fff" font-family='"Liberation Sans", sans-serif' text-anchor="middle" clip-path="url(#xclip)">13</text>
<text x="12" y="547" font-size="13.5" fill="#fff" font-family='"Liberation Sans", sans-serif' text-anchor="middle" clip-path="url(#xclip)">14</text>
<text x="12" y="567" font-size="13.5" fill="#fff" font-family='"Liberation Sans", sans-serif' text-anchor="middle" clip-path="url(#xclip)">15</text>
<text x="12" y="587" font-size="13.5" fill="#fff" font-family='"Liberation Sans", sans-serif' text-anchor="middle" clip-path="url(#xclip)">16</text>
<text x="12" y="607" font-size="13.5" fill="#fff" font-family='"Liberation Sans", sans-serif' text-anchor="middle" clip-path="url(#xclip)">17</text>
<text x="12" y="627" font-size="13.5" fill="#fff" font-family='"Liberation Sans", sans-serif' text-anchor="middle" clip-path="url(#xclip)">18</text>
<text x="12" y="647" font-size="13.5" fill="#fff" font-family='"Liberation Sans", sans-serif' text-anchor="middle" clip-path="url(#xclip)">19</text>
<text x="12" y="667" font-size="13.5" fill="#fff" font-family='"Liberation Sans", sans-serif' text-anchor="middle" clip-path="url(#xclip)">20</text>
<text x="12" y="687" font-size="13.5" fill="#fff" font-family='"Liberation Sans", sans-serif' text-anchor="middle" clip-path="url(#xclip)">21</text>
<text x="12" y="707" font-size="13.5" fill="#fff" font-family='"Liberation Sans", sans-serif' text-anchor="middle" clip-path="url(#xclip)">22</text>
<text x="27.5" y="287" font-size="14.5" fill="#000" font-family='"Liberation Sans", sans-serif' textLength="44" lengthAdjust="spacingAndGlyphs" >Январь</text>
<text x="27.5" y="307" font-size="14.5" fill="#000" font-family='"Liberation Sans", sans-serif' textLength="54.6" lengthAdjust="spacingAndGlyphs" >Февраль</text>
<text x="27.5" y="327" font-size="14.5" fill="#000" font-family='"Liberation Sans", sans-serif' textLength="32.2" lengthAdjust="spacingAndGlyphs" >Март</text>
<text x="27.5" y="347" font-size="14.5" fill="#000" font-family='"Liberation Sans", sans-serif' textLength="47.6" lengthAdjust="spacingAndGlyphs" >Апрель</text>
<text x="150" y="287" font-size="14.5" fill="#000" font-family='"Liberation Sans", sans-serif' text-anchor="end" >-1</text>
<text x="150" y="307" font-size="14.5" fill="#000" font-family='"Liberation Sans", sans-serif' text-anchor="end" >2</text>
<text x="150" y="347" font-size="14.5" fill="#000" font-family='"Liberation Sans", sans-serif' text-anchor="end" >1,5</text>
<text x="214" y="287" font-size="14.5" fill="#000" font-family='"Liberation Sans", sans-serif' text-anchor="end" >0</text>
<text x="214" y="307" font-size="14.5" fill="#000" font-family='"Liberation Sans", sans-serif' text-anchor="end" >3</text>
<text x="214" y="327" font-size="14.5" fill="#000" font-family='"Liberation Sans", sans-serif' text-anchor="end" >1</text>
<text x="214" y="347" font-size="14.5" fill="#000" font-family='"Liberation Sans", sans-serif' text-anchor="end" >2</text>
<rect x="25" y="272" width="64" height="20" fill="none" stroke="#217346" stroke-width="2" />
<rect x="86.5" y="289.5" width="5" height="5" fill="#217346" stroke="#fff" stroke-width="1" />
<clipPath id="c1clip"><rect x="25" y="360" width="500" height="330"/></clipPath>
<g clip-path="url(#c1clip)">
<rect x="24.5" y="371.5" width="480" height="303" fill="#fff" stroke="#000" stroke-width="13" stroke-linejoin="round"/>
<g transform="translate(246.1 429.6) rotate(-45)" font-family='"Liberation Sans", sans-serif' font-weight="bold" font-size="20.700" fill="#008000" text-anchor="middle">
<text x="0" y="-2.6" textLength="86.8" lengthAdjust="spacingAndGlyphs">Линейна</text>
<rect x="-43.4" y="-1.1" width="86.8" height="2.100" fill="#008000"/>
<text x="0" y="21.6" textLength="12.1" lengthAdjust="spacingAndGlyphs">я</text>
<rect x="-6.0" y="23.1" width="12.1" height="2.100" fill="#008000"/>
<text x="0" y="45.8" textLength="85.7" lengthAdjust="spacingAndGlyphs">диаграм</text>
<rect x="-42.9" y="47.3" width="85.7" height="2.100" fill="#008000"/>
<text x="0" y="70.0" textLength="26.9" lengthAdjust="spacingAndGlyphs">ма</text>
<rect x="-13.4" y="71.5" width="26.9" height="2.100" fill="#008000"/>
</g>
<rect x="55.4" y="531.62" width="323.40000000000003" height="127.32000000000005" fill="#e0ffff" />
<line x1="51.0" y1="658.5" x2="378.8" y2="658.5" stroke="#868686" stroke-width="1" />
<text x="44.5" y="662.7" font-size="11.5" fill="#000" font-family='"Liberation Sans", sans-serif' text-anchor="end" >-2</text>
<line x1="51.0" y1="637.5" x2="378.8" y2="637.5" stroke="#868686" stroke-width="1" />
<text x="44.5" y="641.7" font-size="11.5" fill="#000" font-family='"Liberation Sans", sans-serif' text-anchor="end" >-1</text>
<line x1="51.0" y1="616.5" x2="378.8" y2="616.5" stroke="#868686" stroke-width="1" />
<text x="44.5" y="620.7" font-size="11.5" fill="#000" font-family='"Liberation Sans", sans-serif' text-anchor="end" >0</text>
<line x1="51.0" y1="595.5" x2="378.8" y2="595.5" stroke="#868686" stroke-width="1" />
<text x="44.5" y="599.7" font-size="11.5" fill="#000" font-family='"Liberation Sans", sans-serif' text-anchor="end" >1</text>
<line x1="51.0" y1="574.5" x2="378.8" y2="574.5" stroke="#868686" stroke-width="1" />
<text x="44.5" y="578.7" font-size="11.5" fill="#000" font-family='"Liberation Sans", sans-serif' text-anchor="end" >2</text>
<line x1="51.0" y1="552.5" x2="378.8" y2="552.5" stroke="#868686" stroke-width="1" />
<text x="44.5" y="556.7" font-size="11.5" fill="#000" font-family='"Liberation Sans", sans-serif' text-anchor="end" >3</text>
<line x1="51.0" y1="531.5" x2="378.8" y2="531.5" stroke="#868686" stroke-width="1" />
<text x="44.5" y="535.7" font-size="11.5" fill="#000" font-family='"Liberation Sans", sans-serif' text-anchor="end" >4</text>
<line x1="136.5" y1="616.5" x2="136.5" y2="621.0" stroke="#868686" stroke-width="1" />
<line x1="217.5" y1="616.5" x2="217.5" y2="621.0" stroke="#868686" stroke-width="1" />
<line x1="297.5" y1="616.5" x2="297.5" y2="621.0" stroke="#868686" stroke-width="1" />
<line x1="378.5" y1="616.5" x2="378.5" y2="621.0" stroke="#868686" stroke-width="1" />
<text x="76.325" y="638.5" font-size="11.5" fill="#000" font-family='"Liberation Sans", sans-serif' textLength="39" lengthAdjust="spacingAndGlyphs" >Январь</text>
<text x="152.925" y="638.5" font-size="11.5" fill="#000" font-family='"Liberation Sans", sans-serif' textLength="47.5" lengthAdjust="spacingAndGlyphs" >Февраль</text>
<text x="243.77500000000003" y="638.5" font-size="11.5" fill="#000" font-family='"Liberation Sans", sans-serif' textLength="27.5" lengthAdjust="spacingAndGlyphs" >Март</text>
<text x="318.625" y="638.5" font-size="11.5" fill="#000" font-family='"Liberation Sans", sans-serif' textLength="39.5" lengthAdjust="spacingAndGlyphs" >Апрель</text>
<path d="M95.8 616.5 C109.3 605.9 149.7 556.4 176.7 552.8 C203.6 549.3 230.6 591.7 257.5 595.3 C284.5 598.8 324.9 577.6 338.4 574.1" fill="none" stroke="#b97fc6" stroke-width="3.6" stroke-dasharray="11.500 16.500 0.100 16.400" stroke-linecap="round"/>
<rect x="76.2" y="618.1" width="39.2" height="39.2" fill="none" stroke="#0000ff" stroke-width="4.2" />
<rect x="157.1" y="554.5" width="39.2" height="39.2" fill="none" stroke="#0000ff" stroke-width="4.2" />
<rect x="318.8" y="565.1" width="39.2" height="39.2" fill="none" stroke="#0000ff" stroke-width="4.2" />
<rect x="76.2" y="596.9" width="39.2" height="39.2" fill="none" stroke="#0000ff" stroke-width="4.2" />
<rect x="157.1" y="533.2" width="39.2" height="39.2" fill="none" stroke="#0000ff" stroke-width="4.2" />
<rect x="237.9" y="575.7" width="39.2" height="39.2" fill="none" stroke="#0000ff" stroke-width="4.2" />
<rect x="318.8" y="554.5" width="39.2" height="39.2" fill="none" stroke="#0000ff" stroke-width="4.2" />
<path d="M95.8 637.7 C109.3 627.1 136.2 582.9 176.7 574.1 C217.1 565.2 311.4 582.9 338.4 584.7" fill="none" stroke="#ff1a1a" stroke-width="7.2" stroke-linecap="round" stroke-linejoin="round"/>
<rect x="78.3" y="620.2" width="35.0" height="35.0" fill="#ffff40" fill-opacity="0.42"/>
<rect x="159.2" y="556.6" width="35.0" height="35.0" fill="#ffff40" fill-opacity="0.42"/>
<rect x="320.9" y="567.2" width="35.0" height="35.0" fill="#ffff40" fill-opacity="0.42"/>
<rect x="78.3" y="599.0" width="35.0" height="35.0" fill="#ffff40" fill-opacity="0.42"/>
<rect x="159.2" y="535.3" width="35.0" height="35.0" fill="#ffff40" fill-opacity="0.42"/>
<rect x="240.0" y="577.8" width="35.0" height="35.0" fill="#ffff40" fill-opacity="0.42"/>
<rect x="320.9" y="556.6" width="35.0" height="35.0" fill="#ffff40" fill-opacity="0.42"/>
<rect x="78.3" y="634.0" width="35.0" height="4.2" fill="#0000ff" />
<rect x="159.2" y="570.3" width="35.0" height="4.2" fill="#0000ff" />
<rect x="320.9" y="591.6" width="35.0" height="4.2" fill="#0000ff" />
<text x="76.325" y="634.52" font-size="11.5" fill="#000" font-family='"Liberation Sans", sans-serif' textLength="39" lengthAdjust="spacingAndGlyphs" >Январь</text>
<text x="95.825" y="651.32" font-size="11.5" fill="#000" font-family='"Liberation Sans", sans-serif' text-anchor="middle" >-1</text>
<text x="152.925" y="570.8599999999999" font-size="11.5" fill="#000" font-family='"Liberation Sans", sans-serif' textLength="47.5" lengthAdjust="spacingAndGlyphs" >Февраль</text>
<text x="176.675" y="587.66" font-size="11.5" fill="#000" font-family='"Liberation Sans", sans-serif' text-anchor="middle" >2</text>
<text x="318.625" y="581.4699999999999" font-size="11.5" fill="#000" font-family='"Liberation Sans", sans-serif' textLength="39.5" lengthAdjust="spacingAndGlyphs" >Апрель</text>
<text x="338.375" y="598.27" font-size="11.5" fill="#000" font-family='"Liberation Sans", sans-serif' text-anchor="middle" >1,5</text>
<line x1="401" y1="583.3" x2="434" y2="583.3" stroke="#ff1a1a" stroke-width="5.8" stroke-linecap="round"/>
<rect x="413" y="579" width="8" height="8" fill="#ff6010" stroke="#0000ff" stroke-width="4" rx="1" stroke-linejoin="round"/>
<line x1="401" y1="607" x2="410" y2="607" stroke="#b97fc6" stroke-width="3.6" stroke-linecap="round"/>
<circle cx="429" cy="607" r="1.900" fill="#b97fc6"/>
<rect x="413" y="603" width="8" height="8" fill="#ffffb0" stroke="#0000ff" stroke-width="4" rx="1" stroke-linejoin="round"/>
<text x="438.7" y="587.3" font-size="11.5" fill="#000" font-family='"Liberation Sans", sans-serif' textLength="50.6" lengthAdjust="spacingAndGlyphs" >Прибыль</text>
<text x="438.7" y="611.3" font-size="11.5" fill="#000" font-family='"Liberation Sans", sans-serif' textLength="51.3" lengthAdjust="spacingAndGlyphs" >Продажи</text>
</g>
<rect x="600.5" y="371.5" width="480" height="303" fill="#ffff9d" stroke="none" stroke-width="1" fill-opacity="0.6"/>
<rect x="600.5" y="371.5" width="480" height="303" fill="none" stroke="#868686" stroke-width="1" />
<text x="840" y="404" font-size="20" fill="#000" font-family='"Liberation Sans", sans-serif' text-anchor="middle" font-weight="bold" textLength="257" lengthAdjust="spacingAndGlyphs" >Столбиковая диаграмма</text>
<rect x="693.5" y="427.5" width="372.0" height="166.0" fill="#fff" />
<line x1="689.5" y1="593.5" x2="1065.5" y2="593.5" stroke="#868686" stroke-width="1" />
<text x="682" y="597.7" font-size="12" fill="#000" font-family='"Liberation Sans", sans-serif' text-anchor="end" >-6</text>
<line x1="689.5" y1="576.5" x2="1065.5" y2="576.5" stroke="#868686" stroke-width="1" />
<text x="682" y="580.7" font-size="12" fill="#000" font-family='"Liberation Sans", sans-serif' text-anchor="end" >-5</text>
<line x1="689.5" y1="560.5" x2="1065.5" y2="560.5" stroke="#868686" stroke-width="1" />
<text x="682" y="564.7" font-size="12" fill="#000" font-family='"Liberation Sans", sans-serif' text-anchor="end" >-4</text>
<line x1="689.5" y1="543.5" x2="1065.5" y2="543.5" stroke="#868686" stroke-width="1" />
<text x="682" y="547.7" font-size="12" fill="#000" font-family='"Liberation Sans", sans-serif' text-anchor="end" >-3</text>
<line x1="689.5" y1="527.5" x2="1065.5" y2="527.5" stroke="#868686" stroke-width="1" />
<text x="682" y="531.7" font-size="12" fill="#000" font-family='"Liberation Sans", sans-serif' text-anchor="end" >-2</text>
<line x1="689.5" y1="510.5" x2="1065.5" y2="510.5" stroke="#868686" stroke-width="1" />
<text x="682" y="514.7" font-size="12" fill="#000" font-family='"Liberation Sans", sans-serif' text-anchor="end" >-1</text>
<line x1="689.5" y1="493.5" x2="1065.5" y2="493.5" stroke="#868686" stroke-width="1" />
<text x="682" y="497.7" font-size="12" fill="#000" font-family='"Liberation Sans", sans-serif' text-anchor="end" >0</text>
<line x1="689.5" y1="477.5" x2="1065.5" y2="477.5" stroke="#868686" stroke-width="1" />
<text x="682" y="481.7" font-size="12" fill="#000" font-family='"Liberation Sans", sans-serif' text-anchor="end" >1</text>
<line x1="689.5" y1="460.5" x2="1065.5" y2="460.5" stroke="#868686" stroke-width="1" />
<text x="682" y="464.7" font-size="12" fill="#000" font-family='"Liberation Sans", sans-serif' text-anchor="end" >2</text>
<line x1="689.5" y1="444.5" x2="1065.5" y2="444.5" stroke="#868686" stroke-width="1" />
<text x="682" y="448.7" font-size="12" fill="#000" font-family='"Liberation Sans", sans-serif' text-anchor="end" >3</text>
<line x1="689.5" y1="427.5" x2="1065.5" y2="427.5" stroke="#868686" stroke-width="1" />
<text x="682" y="431.7" font-size="12" fill="#000" font-family='"Liberation Sans", sans-serif' text-anchor="end" >4</text>
<line x1="693.5" y1="427.5" x2="693.5" y2="593.5" stroke="#868686" stroke-width="1" />
<defs><pattern id="zz" width="4" height="4" patternUnits="userSpaceOnUse"><rect width="4" height="4" fill="#ff0000"/><path d="M0 3h1v1h-1zM1 2h1v1h-1zM2 1h1v1h-1zM3 2h1v1h-1z" fill="#008000" shape-rendering="crispEdges"/></pattern><pattern id="zg" width="4" height="4" patternUnits="userSpaceOnUse"><rect width="4" height="4" fill="#008000"/><path d="M0 3h1v1h-1zM1 2h1v1h-1zM2 1h1v1h-1zM3 2h1v1h-1z" fill="#ff0000" shape-rendering="crispEdges"/></pattern><clipPath id="c2clip"><rect x="693.500" y="420" width="400" height="180"/></clipPath></defs>
<rect x="718.45" y="493.9" width="24.5" height="16.600000000000023" fill="url(#zg)" />
<rect x="792.85" y="460.7" width="24.5" height="33.19999999999999" fill="url(#zz)" />
<rect x="941.6500000000001" y="469.0" width="24.5" height="24.899999999999977" fill="url(#zz)" />
<text x="730.7" y="511.5" font-size="12" fill="#fff" font-family='"Liberation Sans", sans-serif' text-anchor="middle" font-weight="bold" text-decoration="underline">-1</text>
<text x="805.1" y="478.3" font-size="12" fill="#fff" font-family='"Liberation Sans", sans-serif' text-anchor="middle" font-weight="bold" text-decoration="underline">2</text>
<text x="953.9000000000001" y="484.95" font-size="12" fill="#fff" font-family='"Liberation Sans", sans-serif' text-anchor="middle" font-weight="bold" text-decoration="underline">1,5</text>
<path d="M693.5 548.9 L698.9 542.7 L704.3 536.8 L709.7 531.0 L715.1 525.5 L720.5 520.1 L726.0 514.9 L731.4 509.9 L736.8 505.1 L742.2 500.5 L747.6 496.0 L753.0 491.8 L758.4 487.7 L763.8 483.9 L769.2 480.2 L774.6 476.7 L780.1 473.4 L785.5 470.3 L790.9 467.4 L796.3 464.7 L801.7 462.2 L807.1 459.9 L812.5 457.7 L817.9 455.7 L823.3 454.0 L828.7 452.4 L834.2 451.0 L839.6 449.8 L845.0 448.8 L850.4 448.0 L855.8 447.4 L861.2 446.9 L866.6 446.7 L872.0 446.6 L877.4 446.8 L882.8 447.1 L888.3 447.6 L893.7 448.3 L899.1 449.2 L904.5 450.3 L909.9 451.6 L915.3 453.0 L920.7 454.7 L926.1 456.5 L931.5 458.6 L936.9 460.8 L942.3 463.2 L947.8 465.8 L953.2 468.6 L958.6 471.6 L964.0 474.8 L969.4 478.1 L974.8 481.7 L980.2 485.4 L985.6 489.4 L991.0 493.5 L996.4 497.8 L1001.9 502.3 L1007.3 507.0 L1012.7 511.9" fill="none" stroke="#84168e" stroke-width="7" stroke-linecap="round" stroke-linejoin="round" clip-path="url(#c2clip)" stroke-opacity="0.93"/>
<text x="842" y="509" font-size="11.5" fill="#000" font-family='"Liberation Sans", sans-serif' textLength="66" lengthAdjust="spacingAndGlyphs" >y = -1,0833x</text>
<text x="908" y="504" font-size="7.5" fill="#000" font-family='"Liberation Sans", sans-serif' >2</text>
<text x="913" y="509" font-size="11.5" fill="#000" font-family='"Liberation Sans", sans-serif' textLength="89" lengthAdjust="spacingAndGlyphs" > + 6,25x - 6,1667</text>
<text x="907" y="525" font-size="11.5" fill="#000" font-family='"Liberation Sans", sans-serif' >R</text>
<text x="915" y="520" font-size="7.5" fill="#000" font-family='"Liberation Sans", sans-serif' >2</text>
<text x="920" y="525" font-size="11.5" fill="#000" font-family='"Liberation Sans", sans-serif' > = 1</text>
<line x1="693.5" y1="593.5" x2="1065.5" y2="593.5" stroke="#868686" stroke-width="1" />
<line x1="622.5" y1="614.5" x2="1065.5" y2="614.5" stroke="#868686" stroke-width="1" />
<line x1="622.5" y1="635.5" x2="1065.5" y2="635.5" stroke="#868686" stroke-width="1" />
<line x1="622.5" y1="614.5" x2="622.5" y2="635.5" stroke="#868686" stroke-width="1" />
<line x1="693.5" y1="593.5" x2="693.5" y2="635.5" stroke="#868686" stroke-width="1" />
<line x1="767.5" y1="593.5" x2="767.5" y2="635.5" stroke="#868686" stroke-width="1" />
<line x1="842.5" y1="593.5" x2="842.5" y2="635.5" stroke="#868686" stroke-width="1" />
<line x1="916.5" y1="593.5" x2="916.5" y2="635.5" stroke="#868686" stroke-width="1" />
<line x1="991.5" y1="593.5" x2="991.5" y2="635.5" stroke="#868686" stroke-width="1" />
<line x1="1065.5" y1="593.5" x2="1065.5" y2="635.5" stroke="#868686" stroke-width="1" />
<text x="710.2" y="608.5" font-size="12" fill="#000" font-family='"Liberation Sans", sans-serif' textLength="41" lengthAdjust="spacingAndGlyphs" >Январь</text>
<text x="780.6" y="608.5" font-size="12" fill="#000" font-family='"Liberation Sans", sans-serif' textLength="49" lengthAdjust="spacingAndGlyphs" >Февраль</text>
<text x="864.5" y="608.5" font-size="12" fill="#000" font-family='"Liberation Sans", sans-serif' textLength="30" lengthAdjust="spacingAndGlyphs" >Март</text>
<text x="932.9000000000001" y="608.5" font-size="12" fill="#000" font-family='"Liberation Sans", sans-serif' textLength="42" lengthAdjust="spacingAndGlyphs" >Апрель</text>
<text x="730.7" y="629.5" font-size="12" fill="#000" font-family='"Liberation Sans", sans-serif' text-anchor="middle" >-1</text>
<text x="805.1" y="629.5" font-size="12" fill="#000" font-family='"Liberation Sans", sans-serif' text-anchor="middle" >2</text>
<text x="953.9000000000001" y="629.5" font-size="12" fill="#000" font-family='"Liberation Sans", sans-serif' text-anchor="middle" >1,5</text>
<rect x="627" y="621" width="8" height="7" fill="url(#zz)" />
<text x="638" y="629.5" font-size="12" fill="#000" font-family='"Liberation Sans", sans-serif' textLength="52" lengthAdjust="spacingAndGlyphs" >Продажи</text>
<rect x="728" y="649" width="25" height="8" fill="url(#zz)" />
<text x="756" y="658" font-size="12" fill="#000" font-family='"Liberation Sans", sans-serif' textLength="52" lengthAdjust="spacingAndGlyphs" >Продажи</text>
<line x1="829" y1="653.5" x2="852" y2="653.5" stroke="#8c1e96" stroke-width="6" stroke-linecap="round"/>
<text x="855" y="658" font-size="12" fill="#000" font-family='"Liberation Sans", sans-serif' textLength="101" lengthAdjust="spacingAndGlyphs" >Прогноз прибыли</text>
</svg></div>
<div id="gnumeric"><svg width="1200" height="568" viewBox="0 714 1200 568">
<rect x="0" y="714" width="1202" height="576" fill="#fff" />
<rect x="0" y="714" width="1202" height="23" fill="#535c52" />
<rect x="3.5" y="718.5" width="11" height="13" fill="#f4f4f4" stroke="#8a8a8a" stroke-width="1" />
<path d="M4 722h10M4 725h10M4 728h10M7.500 719v12M11 719v12" fill="none" stroke="#b8c4d8" stroke-width="0.8" />
<circle cx="11" cy="729" r="4.800" fill="#e0303a" stroke="#fff" stroke-width="0.800"/>
<path d="M11 729v-4.800a4.800 4.800 0 0 1 4.800 4.800z" fill="#3a6ad0" stroke="#fff" stroke-width="0.8" />
<text x="22" y="730" font-size="12.5" fill="#fff" font-family='"Liberation Sans", sans-serif' textLength="119" lengthAdjust="spacingAndGlyphs" >Report.xlsx - Gnumeric</text>
<text x="3" y="752.5" font-size="12.5" fill="#000" font-family='"Liberation Sans", sans-serif' textLength="31" lengthAdjust="spacingAndGlyphs" >Файл</text>
<text x="44" y="752.5" font-size="12.5" fill="#000" font-family='"Liberation Sans", sans-serif' textLength="42" lengthAdjust="spacingAndGlyphs" >Правка</text>
<text x="96" y="752.5" font-size="12.5" fill="#000" font-family='"Liberation Sans", sans-serif' textLength="21" lengthAdjust="spacingAndGlyphs" >Вид</text>
<text x="127" y="752.5" font-size="12.5" fill="#000" font-family='"Liberation Sans", sans-serif' textLength="46" lengthAdjust="spacingAndGlyphs" >Вставка</text>
<text x="183" y="752.5" font-size="12.5" fill="#000" font-family='"Liberation Sans", sans-serif' textLength="45" lengthAdjust="spacingAndGlyphs" >Формат</text>
<text x="238" y="752.5" font-size="12.5" fill="#000" font-family='"Liberation Sans", sans-serif' textLength="42" lengthAdjust="spacingAndGlyphs" >Сервис</text>
<text x="290" y="752.5" font-size="12.5" fill="#000" font-family='"Liberation Sans", sans-serif' textLength="67" lengthAdjust="spacingAndGlyphs" >Статистика</text>
<text x="367" y="752.5" font-size="12.5" fill="#000" font-family='"Liberation Sans", sans-serif' textLength="45" lengthAdjust="spacingAndGlyphs" >Данные</text>
<text x="422" y="752.5" font-size="12.5" fill="#000" font-family='"Liberation Sans", sans-serif' textLength="49" lengthAdjust="spacingAndGlyphs" >Справка</text>
<line x1="0" y1="758.5" x2="1202" y2="758.5" stroke="#e4e4e4" stroke-width="1" />
<line x1="0" y1="790.5" x2="1202" y2="790.5" stroke="#d8d8d8" stroke-width="1" />
<line x1="32" y1="828.5" x2="1202" y2="828.5" stroke="#eeeeee" stroke-width="1" />
<text x="10" y="780" font-size="13" fill="#000" font-family='"Liberation Sans", sans-serif' textLength="36" lengthAdjust="spacingAndGlyphs" >Calibri</text>
<line x1="52.5" y1="766" x2="52.5" y2="784" stroke="#777" stroke-width="1" />
<text x="58" y="780" font-size="13" fill="#000" font-family='"Liberation Sans", sans-serif' textLength="13" lengthAdjust="spacingAndGlyphs" >11</text>
<rect x="92.5" y="767.5" width="16" height="15" fill="#e8e8e8" stroke="#9a9a9a" stroke-width="1" rx="1.500"/>
<text x="100.5" y="779.5" font-size="12" fill="#222" font-family='"Liberation Sans", sans-serif' text-anchor="middle" font-weight="bold" >A</text>
<rect x="124.5" y="767.5" width="16" height="15" fill="#e8e8e8" stroke="#9a9a9a" stroke-width="1" rx="1.500"/>
<text x="132.5" y="779.5" font-size="12" fill="#555" font-family='"Liberation Sans", sans-serif' text-anchor="middle" font-style="italic" >A</text>
<rect x="156.5" y="767.5" width="16" height="15" fill="#e8e8e8" stroke="#9a9a9a" stroke-width="1" rx="1.500"/>
<text x="164.5" y="779" font-size="11.5" fill="#666" font-family='"Liberation Sans", sans-serif' text-anchor="middle" >A</text>
<line x1="160" y1="780.5" x2="169" y2="780.5" stroke="#888" stroke-width="1" />
<line x1="186.5" y1="765" x2="186.5" y2="785" stroke="#777" stroke-width="1" />
<rect x="200.5" y="766.5" width="15" height="16.5" fill="#f2f2f2" stroke="#c4c4c4" stroke-width="1" rx="1.500"/>
<line x1="203" y1="769.5" x2="212" y2="769.5" stroke="#aaa" stroke-width="1" />
<line x1="203" y1="772.0" x2="209" y2="772.0" stroke="#aaa" stroke-width="1" />
<line x1="203" y1="774.5" x2="212" y2="774.5" stroke="#aaa" stroke-width="1" />
<line x1="203" y1="777.0" x2="209" y2="777.0" stroke="#aaa" stroke-width="1" />
<line x1="203" y1="779.5" x2="212" y2="779.5" stroke="#aaa" stroke-width="1" />
<rect x="232.5" y="766.5" width="15" height="16.5" fill="#f2f2f2" stroke="#c4c4c4" stroke-width="1" rx="1.500"/>
<line x1="235.0" y1="769.5" x2="244.0" y2="769.5" stroke="#aaa" stroke-width="1" />
<line x1="236.5" y1="772.0" x2="242.5" y2="772.0" stroke="#aaa" stroke-width="1" />
<line x1="235.0" y1="774.5" x2="244.0" y2="774.5" stroke="#aaa" stroke-width="1" />
<line x1="236.5" y1="777.0" x2="242.5" y2="777.0" stroke="#aaa" stroke-width="1" />
<line x1="235.0" y1="779.5" x2="244.0" y2="779.5" stroke="#aaa" stroke-width="1" />
<rect x="264.5" y="766.5" width="15" height="16.5" fill="#f2f2f2" stroke="#c4c4c4" stroke-width="1" rx="1.500"/>
<line x1="267" y1="769.5" x2="276" y2="769.5" stroke="#aaa" stroke-width="1" />
<line x1="270" y1="772.0" x2="276" y2="772.0" stroke="#aaa" stroke-width="1" />
<line x1="267" y1="774.5" x2="276" y2="774.5" stroke="#aaa" stroke-width="1" />
<line x1="270" y1="777.0" x2="276" y2="777.0" stroke="#aaa" stroke-width="1" />
<line x1="267" y1="779.5" x2="276" y2="779.5" stroke="#aaa" stroke-width="1" />
<rect x="295.5" y="769.5" width="17" height="11" fill="#f8f8f8" stroke="#222" stroke-width="1.2" />
<line x1="295" y1="775.5" x2="313" y2="775.5" stroke="#222" stroke-width="1.4" />
<line x1="304" y1="775.5" x2="304" y2="780.5" stroke="#222" stroke-width="1.2" />
<path d="M298 772.500h3.500M299.300 771.300l-1.300 1.200l1.300 1.200M306.500 772.500h3.500M308.700 771.300l1.300 1.200l-1.300 1.200" fill="none" stroke="#222" stroke-width="0.8" />
<rect x="302.8" y="770.8" width="2.4" height="3.2" fill="#333" />
<rect x="329.5" y="770.5" width="13.5" height="8.5" fill="#f4f4f4" stroke="#333" stroke-width="1.2" />
<line x1="336.2" y1="771" x2="336.2" y2="779" stroke="#999" stroke-width="1" />
<line x1="330" y1="774.7" x2="343" y2="774.7" stroke="#aaa" stroke-width="1" />
<rect x="360.5" y="770.5" width="7" height="3" fill="#f0f0f0" stroke="#444" stroke-width="1" />
<rect x="360.5" y="776.7" width="7" height="3" fill="#f0f0f0" stroke="#444" stroke-width="1" />
<rect x="370.1" y="770.5" width="7" height="3" fill="#f0f0f0" stroke="#444" stroke-width="1" />
<rect x="370.1" y="776.7" width="7" height="3" fill="#f0f0f0" stroke="#444" stroke-width="1" />
<line x1="390.5" y1="765" x2="390.5" y2="785" stroke="#777" stroke-width="1" />
<rect x="403" y="767.5" width="15" height="9" fill="#6a946a" stroke="#2a3a2a" stroke-width="0.8" rx="1"/>
<rect x="405" y="769" width="11" height="6" fill="#a8c8a8" />
<ellipse cx="410.500" cy="772" rx="2.500" ry="2.800" fill="#dfe8df" stroke="#4a6a4a" stroke-width="0.600"/>
<circle cx="412.500" cy="778.500" r="3.300" fill="#f0f0f0" stroke="#555" stroke-width="0.800"/><circle cx="409.500" cy="779.500" r="2.200" fill="#e8e8e8" stroke="#666" stroke-width="0.700"/>
<text x="436.5" y="781.5" font-size="16.5" fill="#f0f0f0" font-family='"Liberation Sans", sans-serif' stroke="#3a3a3a" stroke-width="0.700">%</text>
<circle cx="476" cy="776" r="1.300" fill="#111"/>
<path d="M500.300 771.500h8.400M504.500 767.300v8.400" fill="none" stroke="#24386a" stroke-width="3.6" stroke-linecap="round"/>
<path d="M500.300 771.500h8.400M504.500 767.300v8.400" fill="none" stroke="#6a8ac8" stroke-width="2" stroke-linecap="round"/>
<text x="509.5" y="774" font-size="9" fill="#222" font-family='"Liberation Sans", sans-serif' textLength="7" lengthAdjust="spacingAndGlyphs" >.0</text>
<text x="505.5" y="782.5" font-size="9" fill="#222" font-family='"Liberation Sans", sans-serif' textLength="11" lengthAdjust="spacingAndGlyphs" >.00</text>
<path d="M532.500 778.500h7.500" fill="none" stroke="#24386a" stroke-width="3.6" stroke-linecap="round"/>
<path d="M532.500 778.500h7.500" fill="none" stroke="#6a8ac8" stroke-width="2" stroke-linecap="round"/>
<text x="537.5" y="774" font-size="9" fill="#222" font-family='"Liberation Sans", sans-serif' textLength="11" lengthAdjust="spacingAndGlyphs" >.00</text>
<text x="541.5" y="782.5" font-size="9" fill="#222" font-family='"Liberation Sans", sans-serif' textLength="7" lengthAdjust="spacingAndGlyphs" >.0</text>
<line x1="563.5" y1="765" x2="563.5" y2="785" stroke="#777" stroke-width="1" />
<rect x="576.5" y="767.5" width="16" height="15" fill="#ececec" stroke="#b4b4b4" stroke-width="1" rx="1.500"/>
<line x1="579" y1="770.5" x2="590" y2="770.5" stroke="#aaa" stroke-width="1" />
<line x1="584" y1="773.2" x2="590" y2="773.2" stroke="#999" stroke-width="1" />
<line x1="584" y1="775.9" x2="590" y2="775.9" stroke="#999" stroke-width="1" />
<line x1="584" y1="778.6" x2="590" y2="778.6" stroke="#999" stroke-width="1" />
<line x1="579" y1="781" x2="590" y2="781" stroke="#bbb" stroke-width="1" />
<path d="M583 776h-4.500M580.3 774.300l-1.800 1.700l1.800 1.700" fill="none" stroke="#222" stroke-width="1.1" />
<rect x="608.5" y="767.5" width="16" height="15" fill="#ececec" stroke="#b4b4b4" stroke-width="1" rx="1.500"/>
<line x1="611" y1="770.5" x2="622" y2="770.5" stroke="#aaa" stroke-width="1" />
<line x1="616" y1="773.2" x2="622" y2="773.2" stroke="#999" stroke-width="1" />
<line x1="616" y1="775.9" x2="622" y2="775.9" stroke="#999" stroke-width="1" />
<line x1="616" y1="778.6" x2="622" y2="778.6" stroke="#999" stroke-width="1" />
<line x1="611" y1="781" x2="622" y2="781" stroke="#bbb" stroke-width="1" />
<path d="M610.5 773.500h4.500M613.2 771.800l1.800 1.700l-1.800 1.700" fill="none" stroke="#222" stroke-width="1.1" />
<line x1="638.5" y1="765" x2="638.5" y2="785" stroke="#777" stroke-width="1" />
<rect x="651.5" y="766.5" width="16" height="15" fill="#ececec" stroke="#333" stroke-width="1" rx="2"/>
<text x="654" y="778.5" font-size="10.5" fill="#3a3a3a" font-family='"Liberation Sans", sans-serif' >A</text>
<rect x="683.5" y="766.5" width="16" height="15" fill="#ececec" stroke="#333" stroke-width="1" rx="2"/>
<text x="686" y="778.5" font-size="10.5" fill="#3a3a3a" font-family='"Liberation Sans", sans-serif' >A</text>
<text x="661.5" y="772.5" font-size="6" fill="#222" font-family='"Liberation Sans", sans-serif' >x</text>
<line x1="661" y1="774.5" x2="665" y2="774.5" stroke="#222" stroke-width="0.8" />
<text x="693.5" y="781" font-size="6" fill="#222" font-family='"Liberation Sans", sans-serif' >x</text>
<line x1="693" y1="775.5" x2="697" y2="775.5" stroke="#222" stroke-width="0.8" />
<line x1="714.5" y1="765" x2="714.5" y2="785" stroke="#777" stroke-width="1" />
<line x1="730.5" y1="768" x2="730.5" y2="782" stroke="#555" stroke-width="1" />
<line x1="730" y1="781.5" x2="743" y2="781.5" stroke="#999" stroke-width="1" stroke-dasharray="1 1"/>
<line x1="736.5" y1="769" x2="736.5" y2="782" stroke="#999" stroke-width="1" stroke-dasharray="1 1"/>
<line x1="742.5" y1="769" x2="742.5" y2="782" stroke="#999" stroke-width="1" stroke-dasharray="1 1"/>
<line x1="731" y1="769.5" x2="743" y2="769.5" stroke="#999" stroke-width="1" stroke-dasharray="1 1"/>
<line x1="731" y1="775.5" x2="743" y2="775.5" stroke="#999" stroke-width="1" stroke-dasharray="1 1"/>
<path d="M762 772h9l-4.500 4.500z" fill="#111" />
<path d="M791.500 775.500l5-5.500l5.500 5l-5 5.500z" fill="#fff" stroke="#222" stroke-width="1.1" />
<path d="M796 766.500v6.500" fill="none" stroke="#222" stroke-width="1.1" />
<path d="M801 774.500c2.500 1.500 2.500 4 1.500 6.500" fill="none" stroke="#222" stroke-width="1.6" />
<path d="M794 776l6-0.500l-3.500 4z" fill="#888" />
<path d="M822 772h9l-4.500 4.500z" fill="#111" />
<text x="850" y="780.5" font-size="18" fill="#111" font-family='"Liberation Serif", serif' font-weight="bold" >A</text>
<path d="M883 772h9l-4.500 4.500z" fill="#111" />
<path d="M7.500 797.500h10l4 4v14.500h-14z" fill="#fbfbfb" stroke="#c4c4c4" stroke-width="1" />
<rect x="31.5" y="799.5" width="155" height="21" fill="#fff" stroke="#6a6a6a" stroke-width="1" />
<text x="34" y="814.5" font-size="12" fill="#000" font-family='"Liberation Sans", sans-serif' textLength="14" lengthAdjust="spacingAndGlyphs" >A1</text>
<circle cx="177" cy="811" r="5.500" fill="#e8d24a" stroke="#a8942a" stroke-width="0.800"/>
<path d="M166 808.500h5v-3l6 5.500l-6 5.500v-3h-5z" fill="#5ab82a" stroke="#3a7a1a" stroke-width="0.8" />
<path d="M201 798l6.200 7.300l6.200-7.300l3.600 2.600l-6.600 8l6.600 8l-3.600 2.600l-6.200-7.300l-6.200 7.300l-3.600-2.600l6.600-8l-6.600-8z" fill="#f2a6ae" stroke="#e4808a" stroke-width="0.9" stroke-linejoin="round"/>
<path d="M232.500 811L243 802.500V807.500H248.500V798.500H255.500V812.500Q255.500 814.500 253.500 814.500H243V819.500Z" fill="#b4d0ee" stroke="#8cb0dc" stroke-width="0.9" stroke-linejoin="round"/>
<path d="M273 807h9l-4.500 4.500z" fill="#666" />
<rect x="305" y="807" width="12" height="2" fill="#111" />
<rect x="305" y="811.5" width="12" height="2" fill="#111" />
<rect x="330.5" y="799.5" width="880" height="21" fill="#fff" stroke="#6a6a6a" stroke-width="1" />
<text x="333" y="814.5" font-size="12" fill="#000" font-family='"Liberation Sans", sans-serif' textLength="42" lengthAdjust="spacingAndGlyphs" >Январь</text>
<path d="M7 833h7l2 2h7v11h-16z" fill="#c8ccb0" stroke="#a8ac90" stroke-width="0.8" />
<path d="M7 846l3-7h14l-1 7z" fill="#dadcc4" stroke="#a8ac90" stroke-width="0.8" />
<rect x="6.5" y="862.5" width="16" height="16" fill="#3a62b0" stroke="#284a8a" stroke-width="1" rx="1.500"/>
<rect x="9" y="864" width="11" height="6" fill="#f4f4f4" />
<rect x="9" y="864" width="11" height="2" fill="#e03030" />
<rect x="10" y="872" width="9" height="6" fill="#c8d0e0" />
<line x1="5" y1="893.5" x2="25" y2="893.5" stroke="#999" stroke-width="1" />
<rect x="8.5" y="907.5" width="12" height="6" fill="#f4f4f4" stroke="#999" stroke-width="1" />
<rect x="5.5" y="912.5" width="18" height="8" fill="#d0d0d0" stroke="#888" stroke-width="1" rx="1.500"/>
<rect x="8.5" y="917.5" width="12" height="4" fill="#f4f4f4" stroke="#999" stroke-width="1" />
<rect x="8.5" y="939.5" width="12" height="6" fill="#f4f4f4" stroke="#999" stroke-width="1" />
<rect x="5.5" y="944.5" width="18" height="8" fill="#d0d0d0" stroke="#888" stroke-width="1" rx="1.500"/>
<circle cx="17" cy="949" r="4" fill="#b8d4f0" stroke="#3a5a8a" stroke-width="1.200"/>
<line x1="20" y1="952" x2="24" y2="956" stroke="#3a5a8a" stroke-width="2" />
<line x1="5" y1="969.5" x2="25" y2="969.5" stroke="#999" stroke-width="1" />
<path d="M10 983l6 10M18 983l-6 10" fill="none" stroke="#b8a060" stroke-width="2" />
<circle cx="10.500" cy="996" r="2.500" fill="none" stroke="#a03030" stroke-width="1.600"/><circle cx="18" cy="996" r="2.500" fill="none" stroke="#a03030" stroke-width="1.600"/>
<rect x="7.5" y="1014.5" width="10" height="10" fill="#f0f0f0" stroke="#b0b0b0" stroke-width="1" />
<rect x="11.5" y="1018.5" width="10" height="10" fill="#f0f0f0" stroke="#b0b0b0" stroke-width="1" />
<rect x="6.5" y="1047.5" width="15" height="17" fill="#c89040" stroke="#8a6020" stroke-width="1" rx="1.500"/>
<rect x="9.5" y="1051.5" width="9" height="11" fill="#f4f4f4" stroke="#999" stroke-width="1" />
<rect x="10.5" y="1045.5" width="7" height="4" fill="#888" stroke="#555" stroke-width="1" rx="1"/>
<line x1="5" y1="1077.5" x2="25" y2="1077.5" stroke="#999" stroke-width="1" />
<path d="M18 1093c-6-2-8 2-6 6l-3 0l5 6l3-7l-3 0c-1-2 0-4 4-3z" fill="#f0e4a0" stroke="#e0d080" stroke-width="0.8" />
<path d="M12 1125c6-2 8 2 6 6l3 0l-5 6l-3-7l3 0c1-2 0-4-4-3z" fill="#b8e0b0" stroke="#98d090" stroke-width="0.8" />
<line x1="5" y1="1153.5" x2="25" y2="1153.5" stroke="#999" stroke-width="1" />
<circle cx="14.500" cy="1175" r="8" fill="#2a3a6a" stroke="#111" stroke-width="1"/><circle cx="14.500" cy="1175" r="4.500" fill="#5a78b0"/>
<path d="M8 1174h7v-3l5 4.500l-5 4.500v-3h-7z" fill="#e8d040" stroke="#806a10" stroke-width="0.6" />
<text x="14.5" y="1214" font-size="20" fill="#333" font-family='"Liberation Serif", serif' text-anchor="middle" font-weight="bold" >Σ</text>
<text x="6" y="1243" font-size="12" fill="#222" font-family='"Liberation Serif", serif' font-style="italic" >f(</text>
<text x="14.5" y="1243" font-size="12" fill="#c02020" font-family='"Liberation Serif", serif' font-style="italic" >x</text>
<text x="20" y="1243" font-size="12" fill="#222" font-family='"Liberation Serif", serif' font-style="italic" >)</text>
<text x="7" y="1270" font-size="7.5" fill="#2a4ab0" font-family='"Liberation Sans", sans-serif' font-weight="bold" >A</text>
<text x="17" y="1279" font-size="7.5" fill="#2a4ab0" font-family='"Liberation Sans", sans-serif' font-weight="bold" >Z</text>
<path d="M8 1273l5 0l0 5l-5 0z" fill="#40b040" />
<line x1="12" y1="1268" x2="17" y2="1273" stroke="#9ab" stroke-width="0.8" stroke-dasharray="1 1"/>
<clipPath id="gclip"><rect x="0" y="714" width="1202" height="576"/></clipPath>
<g clip-path="url(#gclip)">
<line x1="161.5" y1="850" x2="161.5" y2="1290" stroke="#c6c6c6" stroke-width="1" />
<line x1="225.5" y1="850" x2="225.5" y2="1290" stroke="#c6c6c6" stroke-width="1" />
<line x1="289.5" y1="850" x2="289.5" y2="1290" stroke="#c6c6c6" stroke-width="1" />
<line x1="353.5" y1="850" x2="353.5" y2="1290" stroke="#c6c6c6" stroke-width="1" />
<line x1="417.5" y1="850" x2="417.5" y2="1290" stroke="#c6c6c6" stroke-width="1" />
<line x1="481.5" y1="850" x2="481.5" y2="1290" stroke="#c6c6c6" stroke-width="1" />
<line x1="545.5" y1="850" x2="545.5" y2="1290" stroke="#c6c6c6" stroke-width="1" />
<line x1="609.5" y1="850" x2="609.5" y2="1290" stroke="#c6c6c6" stroke-width="1" />
<line x1="673.5" y1="850" x2="673.5" y2="1290" stroke="#c6c6c6" stroke-width="1" />
<line x1="737.5" y1="850" x2="737.5" y2="1290" stroke="#c6c6c6" stroke-width="1" />
<line x1="801.5" y1="850" x2="801.5" y2="1290" stroke="#c6c6c6" stroke-width="1" />
<line x1="865.5" y1="850" x2="865.5" y2="1290" stroke="#c6c6c6" stroke-width="1" />
<line x1="929.5" y1="850" x2="929.5" y2="1290" stroke="#c6c6c6" stroke-width="1" />
<line x1="993.5" y1="850" x2="993.5" y2="1290" stroke="#c6c6c6" stroke-width="1" />
<line x1="1057.5" y1="850" x2="1057.5" y2="1290" stroke="#c6c6c6" stroke-width="1" />
<line x1="1121.5" y1="850" x2="1121.5" y2="1290" stroke="#c6c6c6" stroke-width="1" />
<line x1="1185.5" y1="850" x2="1185.5" y2="1290" stroke="#c6c6c6" stroke-width="1" />
<line x1="98" y1="869.5" x2="1202" y2="869.5" stroke="#c6c6c6" stroke-width="1" />
<line x1="98" y1="889.5" x2="1202" y2="889.5" stroke="#c6c6c6" stroke-width="1" />
<line x1="98" y1="909.5" x2="1202" y2="909.5" stroke="#c6c6c6" stroke-width="1" />
<line x1="98" y1="929.5" x2="1202" y2="929.5" stroke="#c6c6c6" stroke-width="1" />
<line x1="98" y1="949.5" x2="1202" y2="949.5" stroke="#c6c6c6" stroke-width="1" />
<line x1="98" y1="969.5" x2="1202" y2="969.5" stroke="#c6c6c6" stroke-width="1" />
<line x1="98" y1="989.5" x2="1202" y2="989.5" stroke="#c6c6c6" stroke-width="1" />
<line x1="98" y1="1009.5" x2="1202" y2="1009.5" stroke="#c6c6c6" stroke-width="1" />
<line x1="98" y1="1029.5" x2="1202" y2="1029.5" stroke="#c6c6c6" stroke-width="1" />
<line x1="98" y1="1049.5" x2="1202" y2="1049.5" stroke="#c6c6c6" stroke-width="1" />
<line x1="98" y1="1069.5" x2="1202" y2="1069.5" stroke="#c6c6c6" stroke-width="1" />
<line x1="98" y1="1089.5" x2="1202" y2="1089.5" stroke="#c6c6c6" stroke-width="1" />
<line x1="98" y1="1109.5" x2="1202" y2="1109.5" stroke="#c6c6c6" stroke-width="1" />
<line x1="98" y1="1129.5" x2="1202" y2="1129.5" stroke="#c6c6c6" stroke-width="1" />
<line x1="98" y1="1149.5" x2="1202" y2="1149.5" stroke="#c6c6c6" stroke-width="1" />
<line x1="98" y1="1169.5" x2="1202" y2="1169.5" stroke="#c6c6c6" stroke-width="1" />
<line x1="98" y1="1189.5" x2="1202" y2="1189.5" stroke="#c6c6c6" stroke-width="1" />
<line x1="98" y1="1209.5" x2="1202" y2="1209.5" stroke="#c6c6c6" stroke-width="1" />
<line x1="98" y1="1229.5" x2="1202" y2="1229.5" stroke="#c6c6c6" stroke-width="1" />
<line x1="98" y1="1249.5" x2="1202" y2="1249.5" stroke="#c6c6c6" stroke-width="1" />
<line x1="98" y1="1269.5" x2="1202" y2="1269.5" stroke="#c6c6c6" stroke-width="1" />
<line x1="98" y1="1289.5" x2="1202" y2="1289.5" stroke="#c6c6c6" stroke-width="1" />
<rect x="32.5" y="831" width="64" height="17" fill="#e4e4e4" stroke="#acacac" stroke-width="1" />
<rect x="98.5" y="831" width="62.5" height="17" fill="#e4f0fb" stroke="#3c8ce0" stroke-width="1" />
<text x="128.5" y="844.5" font-size="12.5" fill="#e01010" font-family='"DejaVu Sans", "Liberation Sans", sans-serif' text-anchor="middle" font-weight="bold" >A</text>
<rect x="162.5" y="831" width="62" height="17" fill="#e4e4e4" stroke="#acacac" stroke-width="1" />
<text x="193.0" y="844.5" font-size="12" fill="#111" font-family='"DejaVu Sans", "Liberation Sans", sans-serif' text-anchor="middle" >B</text>
<rect x="226.5" y="831" width="62" height="17" fill="#e4e4e4" stroke="#acacac" stroke-width="1" />
<text x="257.0" y="844.5" font-size="12" fill="#111" font-family='"DejaVu Sans", "Liberation Sans", sans-serif' text-anchor="middle" >C</text>
<rect x="290.5" y="831" width="62" height="17" fill="#e4e4e4" stroke="#acacac" stroke-width="1" />
<text x="321.0" y="844.5" font-size="12" fill="#111" font-family='"DejaVu Sans", "Liberation Sans", sans-serif' text-anchor="middle" >D</text>
<rect x="354.5" y="831" width="62" height="17" fill="#e4e4e4" stroke="#acacac" stroke-width="1" />
<text x="385.0" y="844.5" font-size="12" fill="#111" font-family='"DejaVu Sans", "Liberation Sans", sans-serif' text-anchor="middle" >E</text>
<rect x="418.5" y="831" width="62" height="17" fill="#e4e4e4" stroke="#acacac" stroke-width="1" />
<text x="449.0" y="844.5" font-size="12" fill="#111" font-family='"DejaVu Sans", "Liberation Sans", sans-serif' text-anchor="middle" >F</text>
<rect x="482.5" y="831" width="62" height="17" fill="#e4e4e4" stroke="#acacac" stroke-width="1" />
<text x="513.0" y="844.5" font-size="12" fill="#111" font-family='"DejaVu Sans", "Liberation Sans", sans-serif' text-anchor="middle" >G</text>
<rect x="546.5" y="831" width="62" height="17" fill="#e4e4e4" stroke="#acacac" stroke-width="1" />
<text x="577.0" y="844.5" font-size="12" fill="#111" font-family='"DejaVu Sans", "Liberation Sans", sans-serif' text-anchor="middle" >H</text>
<rect x="610.5" y="831" width="62" height="17" fill="#e4e4e4" stroke="#acacac" stroke-width="1" />
<text x="641.0" y="844.5" font-size="12" fill="#111" font-family='"DejaVu Sans", "Liberation Sans", sans-serif' text-anchor="middle" >I</text>
<rect x="674.5" y="831" width="62" height="17" fill="#e4e4e4" stroke="#acacac" stroke-width="1" />
<text x="705.0" y="844.5" font-size="12" fill="#111" font-family='"DejaVu Sans", "Liberation Sans", sans-serif' text-anchor="middle" >J</text>
<rect x="738.5" y="831" width="62" height="17" fill="#e4e4e4" stroke="#acacac" stroke-width="1" />
<text x="769.0" y="844.5" font-size="12" fill="#111" font-family='"DejaVu Sans", "Liberation Sans", sans-serif' text-anchor="middle" >K</text>
<rect x="802.5" y="831" width="62" height="17" fill="#e4e4e4" stroke="#acacac" stroke-width="1" />
<text x="833.0" y="844.5" font-size="12" fill="#111" font-family='"DejaVu Sans", "Liberation Sans", sans-serif' text-anchor="middle" >L</text>
<rect x="866.5" y="831" width="62" height="17" fill="#e4e4e4" stroke="#acacac" stroke-width="1" />
<text x="897.0" y="844.5" font-size="12" fill="#111" font-family='"DejaVu Sans", "Liberation Sans", sans-serif' text-anchor="middle" >M</text>
<rect x="930.5" y="831" width="62" height="17" fill="#e4e4e4" stroke="#acacac" stroke-width="1" />
<text x="961.0" y="844.5" font-size="12" fill="#111" font-family='"DejaVu Sans", "Liberation Sans", sans-serif' text-anchor="middle" >N</text>
<rect x="994.5" y="831" width="62" height="17" fill="#e4e4e4" stroke="#acacac" stroke-width="1" />
<text x="1025.0" y="844.5" font-size="12" fill="#111" font-family='"DejaVu Sans", "Liberation Sans", sans-serif' text-anchor="middle" >O</text>
<rect x="1058.5" y="831" width="62" height="17" fill="#e4e4e4" stroke="#acacac" stroke-width="1" />
<text x="1089.0" y="844.5" font-size="12" fill="#111" font-family='"DejaVu Sans", "Liberation Sans", sans-serif' text-anchor="middle" >P</text>
<rect x="1122.5" y="831" width="62" height="17" fill="#e4e4e4" stroke="#acacac" stroke-width="1" />
<text x="1153.0" y="844.5" font-size="12" fill="#111" font-family='"DejaVu Sans", "Liberation Sans", sans-serif' text-anchor="middle" >Q</text>
<rect x="1186.5" y="831" width="62" height="17" fill="#e4e4e4" stroke="#acacac" stroke-width="1" />
<text x="1217.0" y="844.5" font-size="12" fill="#111" font-family='"DejaVu Sans", "Liberation Sans", sans-serif' text-anchor="middle" >R</text>
<rect x="32.5" y="850.5" width="64" height="18" fill="#e4f0fb" stroke="#3c8ce0" stroke-width="1" />
<text x="64" y="864.5" font-size="12.5" fill="#e01010" font-family='"DejaVu Sans", "Liberation Sans", sans-serif' text-anchor="middle" font-weight="bold" >1</text>
<rect x="32.5" y="870.5" width="64" height="18" fill="#e4e4e4" stroke="#acacac" stroke-width="1" />
<text x="64" y="884.5" font-size="12" fill="#111" font-family='"DejaVu Sans", "Liberation Sans", sans-serif' text-anchor="middle" >2</text>
<rect x="32.5" y="890.5" width="64" height="18" fill="#e4e4e4" stroke="#acacac" stroke-width="1" />
<text x="64" y="904.5" font-size="12" fill="#111" font-family='"DejaVu Sans", "Liberation Sans", sans-serif' text-anchor="middle" >3</text>
<rect x="32.5" y="910.5" width="64" height="18" fill="#e4e4e4" stroke="#acacac" stroke-width="1" />
<text x="64" y="924.5" font-size="12" fill="#111" font-family='"DejaVu Sans", "Liberation Sans", sans-serif' text-anchor="middle" >4</text>
<rect x="32.5" y="930.5" width="64" height="18" fill="#e4e4e4" stroke="#acacac" stroke-width="1" />
<text x="64" y="944.5" font-size="12" fill="#111" font-family='"DejaVu Sans", "Liberation Sans", sans-serif' text-anchor="middle" >5</text>
<rect x="32.5" y="950.5" width="64" height="18" fill="#e4e4e4" stroke="#acacac" stroke-width="1" />
<text x="64" y="964.5" font-size="12" fill="#111" font-family='"DejaVu Sans", "Liberation Sans", sans-serif' text-anchor="middle" >6</text>
<rect x="32.5" y="970.5" width="64" height="18" fill="#e4e4e4" stroke="#acacac" stroke-width="1" />
<text x="64" y="984.5" font-size="12" fill="#111" font-family='"DejaVu Sans", "Liberation Sans", sans-serif' text-anchor="middle" >7</text>
<rect x="32.5" y="990.5" width="64" height="18" fill="#e4e4e4" stroke="#acacac" stroke-width="1" />
<text x="64" y="1004.5" font-size="12" fill="#111" font-family='"DejaVu Sans", "Liberation Sans", sans-serif' text-anchor="middle" >8</text>
<rect x="32.5" y="1010.5" width="64" height="18" fill="#e4e4e4" stroke="#acacac" stroke-width="1" />
<text x="64" y="1024.5" font-size="12" fill="#111" font-family='"DejaVu Sans", "Liberation Sans", sans-serif' text-anchor="middle" >9</text>
<rect x="32.5" y="1030.5" width="64" height="18" fill="#e4e4e4" stroke="#acacac" stroke-width="1" />
<text x="64" y="1044.5" font-size="12" fill="#111" font-family='"DejaVu Sans", "Liberation Sans", sans-serif' text-anchor="middle" >10</text>
<rect x="32.5" y="1050.5" width="64" height="18" fill="#e4e4e4" stroke="#acacac" stroke-width="1" />
<text x="64" y="1064.5" font-size="12" fill="#111" font-family='"DejaVu Sans", "Liberation Sans", sans-serif' text-anchor="middle" >11</text>
<rect x="32.5" y="1070.5" width="64" height="18" fill="#e4e4e4" stroke="#acacac" stroke-width="1" />
<text x="64" y="1084.5" font-size="12" fill="#111" font-family='"DejaVu Sans", "Liberation Sans", sans-serif' text-anchor="middle" >12</text>
<rect x="32.5" y="1090.5" width="64" height="18" fill="#e4e4e4" stroke="#acacac" stroke-width="1" />
<text x="64" y="1104.5" font-size="12" fill="#111" font-family='"DejaVu Sans", "Liberation Sans", sans-serif' text-anchor="middle" >13</text>
<rect x="32.5" y="1110.5" width="64" height="18" fill="#e4e4e4" stroke="#acacac" stroke-width="1" />
<text x="64" y="1124.5" font-size="12" fill="#111" font-family='"DejaVu Sans", "Liberation Sans", sans-serif' text-anchor="middle" >14</text>
<rect x="32.5" y="1130.5" width="64" height="18" fill="#e4e4e4" stroke="#acacac" stroke-width="1" />
<text x="64" y="1144.5" font-size="12" fill="#111" font-family='"DejaVu Sans", "Liberation Sans", sans-serif' text-anchor="middle" >15</text>
<rect x="32.5" y="1150.5" width="64" height="18" fill="#e4e4e4" stroke="#acacac" stroke-width="1" />
<text x="64" y="1164.5" font-size="12" fill="#111" font-family='"DejaVu Sans", "Liberation Sans", sans-serif' text-anchor="middle" >16</text>
<rect x="32.5" y="1170.5" width="64" height="18" fill="#e4e4e4" stroke="#acacac" stroke-width="1" />
<text x="64" y="1184.5" font-size="12" fill="#111" font-family='"DejaVu Sans", "Liberation Sans", sans-serif' text-anchor="middle" >17</text>
<rect x="32.5" y="1190.5" width="64" height="18" fill="#e4e4e4" stroke="#acacac" stroke-width="1" />
<text x="64" y="1204.5" font-size="12" fill="#111" font-family='"DejaVu Sans", "Liberation Sans", sans-serif' text-anchor="middle" >18</text>
<rect x="32.5" y="1210.5" width="64" height="18" fill="#e4e4e4" stroke="#acacac" stroke-width="1" />
<text x="64" y="1224.5" font-size="12" fill="#111" font-family='"DejaVu Sans", "Liberation Sans", sans-serif' text-anchor="middle" >19</text>
<rect x="32.5" y="1230.5" width="64" height="18" fill="#e4e4e4" stroke="#acacac" stroke-width="1" />
<text x="64" y="1244.5" font-size="12" fill="#111" font-family='"DejaVu Sans", "Liberation Sans", sans-serif' text-anchor="middle" >20</text>
<rect x="32.5" y="1250.5" width="64" height="18" fill="#e4e4e4" stroke="#acacac" stroke-width="1" />
<text x="64" y="1264.5" font-size="12" fill="#111" font-family='"DejaVu Sans", "Liberation Sans", sans-serif' text-anchor="middle" >21</text>
<rect x="32.5" y="1270.5" width="64" height="18" fill="#e4e4e4" stroke="#acacac" stroke-width="1" />
<text x="64" y="1284.5" font-size="12" fill="#111" font-family='"DejaVu Sans", "Liberation Sans", sans-serif' text-anchor="middle" >22</text>
<rect x="32.5" y="1290.5" width="64" height="18" fill="#e4e4e4" stroke="#acacac" stroke-width="1" />
<text x="64" y="1304.5" font-size="12" fill="#111" font-family='"DejaVu Sans", "Liberation Sans", sans-serif' text-anchor="middle" >23</text>
<text x="100" y="865" font-size="12.5" fill="#000" font-family='"DejaVu Sans", "Liberation Sans", sans-serif' textLength="46" lengthAdjust="spacingAndGlyphs" >Январь</text>
<text x="100" y="885" font-size="12.5" fill="#000" font-family='"DejaVu Sans", "Liberation Sans", sans-serif' textLength="56" lengthAdjust="spacingAndGlyphs" >Февраль</text>
<text x="100" y="905" font-size="12.5" fill="#000" font-family='"DejaVu Sans", "Liberation Sans", sans-serif' textLength="33" lengthAdjust="spacingAndGlyphs" >Март</text>
<text x="100" y="925" font-size="12.5" fill="#000" font-family='"DejaVu Sans", "Liberation Sans", sans-serif' textLength="48" lengthAdjust="spacingAndGlyphs" >Апрель</text>
<text x="223" y="865" font-size="12.5" fill="#000" font-family='"DejaVu Sans", "Liberation Sans", sans-serif' text-anchor="end" textLength="12.5" lengthAdjust="spacingAndGlyphs" >−1</text>
<text x="223" y="885" font-size="12.5" fill="#000" font-family='"DejaVu Sans", "Liberation Sans", sans-serif' text-anchor="end" >2</text>
<text x="223" y="925" font-size="12.5" fill="#000" font-family='"DejaVu Sans", "Liberation Sans", sans-serif' text-anchor="end" >1,5</text>
<text x="287" y="865" font-size="12.5" fill="#000" font-family='"DejaVu Sans", "Liberation Sans", sans-serif' text-anchor="end" >0</text>
<text x="287" y="885" font-size="12.5" fill="#000" font-family='"DejaVu Sans", "Liberation Sans", sans-serif' text-anchor="end" >3</text>
<text x="287" y="905" font-size="12.5" fill="#000" font-family='"DejaVu Sans", "Liberation Sans", sans-serif' text-anchor="end" >1</text>
<text x="287" y="925" font-size="12.5" fill="#000" font-family='"DejaVu Sans", "Liberation Sans", sans-serif' text-anchor="end" >2</text>
<rect x="98" y="850.5" width="63.5" height="19" fill="none" stroke="#000" stroke-width="1.6" />
<rect x="159.5" y="868" width="3" height="3" fill="#000" stroke="#fff" stroke-width="0.6" />
</g>
<rect x="103.5" y="955.7" width="464.2" height="290.4" fill="#fff" stroke="#000" stroke-width="13" stroke-linejoin="round"/>
<rect x="132.5" y="973.5" width="304.3" height="255" fill="#e0ffff" />
<line x1="132.5" y1="1228.5" x2="436.8" y2="1228.5" stroke="#555555" stroke-width="1" />
<line x1="125.5" y1="1228.5" x2="132.5" y2="1228.5" stroke="#000" stroke-width="1" />
<text x="123.5" y="1232.5" font-size="10.5" fill="#000" font-family='"Liberation Sans", sans-serif' text-anchor="end" >-2</text>
<line x1="132.5" y1="1185.5" x2="436.8" y2="1185.5" stroke="#555555" stroke-width="1" />
<line x1="125.5" y1="1185.5" x2="132.5" y2="1185.5" stroke="#000" stroke-width="1" />
<text x="123.5" y="1189.5" font-size="10.5" fill="#000" font-family='"Liberation Sans", sans-serif' text-anchor="end" >-1</text>
<line x1="125.5" y1="1143.5" x2="132.5" y2="1143.5" stroke="#000" stroke-width="1" />
<text x="123.5" y="1147.5" font-size="10.5" fill="#000" font-family='"Liberation Sans", sans-serif' text-anchor="end" >0</text>
<line x1="132.5" y1="1100.5" x2="436.8" y2="1100.5" stroke="#555555" stroke-width="1" />
<line x1="125.5" y1="1100.5" x2="132.5" y2="1100.5" stroke="#000" stroke-width="1" />
<text x="123.5" y="1104.5" font-size="10.5" fill="#000" font-family='"Liberation Sans", sans-serif' text-anchor="end" >1</text>
<line x1="132.5" y1="1058.5" x2="436.8" y2="1058.5" stroke="#555555" stroke-width="1" />
<line x1="125.5" y1="1058.5" x2="132.5" y2="1058.5" stroke="#000" stroke-width="1" />
<text x="123.5" y="1062.5" font-size="10.5" fill="#000" font-family='"Liberation Sans", sans-serif' text-anchor="end" >2</text>
<line x1="132.5" y1="1015.5" x2="436.8" y2="1015.5" stroke="#555555" stroke-width="1" />
<line x1="125.5" y1="1015.5" x2="132.5" y2="1015.5" stroke="#000" stroke-width="1" />
<text x="123.5" y="1019.5" font-size="10.5" fill="#000" font-family='"Liberation Sans", sans-serif' text-anchor="end" >3</text>
<line x1="132.5" y1="973.5" x2="436.8" y2="973.5" stroke="#555555" stroke-width="1" />
<line x1="125.5" y1="973.5" x2="132.5" y2="973.5" stroke="#000" stroke-width="1" />
<text x="123.5" y="977.5" font-size="10.5" fill="#000" font-family='"Liberation Sans", sans-serif' text-anchor="end" >4</text>
<line x1="436.5" y1="973.5" x2="436.5" y2="1228.5" stroke="#555555" stroke-width="1" />
<line x1="132.5" y1="973" x2="132.5" y2="1229" stroke="#000" stroke-width="1" />
<line x1="132.5" y1="1143.5" x2="436.8" y2="1143.5" stroke="#000" stroke-width="1" />
<line x1="233.5" y1="1143.5" x2="233.5" y2="1149.5" stroke="#000" stroke-width="1" />
<line x1="335.5" y1="1143.5" x2="335.5" y2="1149.5" stroke="#000" stroke-width="1" />
<line x1="436.5" y1="1143.5" x2="436.5" y2="1149.5" stroke="#000" stroke-width="1" />
<text x="115.5" y="1161.6" font-size="10.5" fill="#000" font-family='"Liberation Sans", sans-serif' textLength="34" lengthAdjust="spacingAndGlyphs" >Январь</text>
<text x="214.6" y="1161.6" font-size="10.5" fill="#000" font-family='"Liberation Sans", sans-serif' textLength="38.7" lengthAdjust="spacingAndGlyphs" >Февраль</text>
<text x="323.4" y="1161.6" font-size="10.5" fill="#000" font-family='"Liberation Sans", sans-serif' textLength="24" lengthAdjust="spacingAndGlyphs" >Март</text>
<text x="419.3" y="1161.6" font-size="10.5" fill="#000" font-family='"Liberation Sans", sans-serif' textLength="35" lengthAdjust="spacingAndGlyphs" >Апрель</text>
<path d="M132.5 1143.3 L233.9 1015.8 L335.4 1100.8 L436.8 1058.3" fill="none" stroke="#ff00ff" stroke-width="4.4" stroke-dasharray="39.100 28 9.700 27.700" stroke-dashoffset="1.300" stroke-linecap="round" stroke-linejoin="round"/>
<line x1="132.5" y1="1185.8" x2="233.93333333333334" y2="1058.3" stroke="#000080" stroke-width="5" />
<rect x="128.1" y="1139.3" width="8" height="8" fill="#ff00ff" />
<rect x="229.5" y="1011.8" width="8" height="8" fill="#ff00ff" />
<rect x="331.0" y="1096.8" width="8" height="8" fill="#ff00ff" />
<rect x="432.4" y="1054.3" width="8" height="8" fill="#ff00ff" />
<rect x="128.1" y="1181.8" width="8" height="8" fill="#000080" />
<rect x="229.5" y="1054.3" width="8" height="8" fill="#000080" />
<rect x="432.4" y="1075.5" width="8" height="8" fill="#000080" />
<g transform="translate(194.25 1038.05) rotate(45)" font-family='"DejaVu Sans", "Liberation Sans", sans-serif' font-size="17" fill="#008000" text-anchor="middle">
<text x="0" y="0" textLength="91.800" lengthAdjust="spacingAndGlyphs">Линейная</text><text x="0" y="27" textLength="99.800" lengthAdjust="spacingAndGlyphs">диаграмма</text></g>
<rect x="460.5" y="1081.5" width="95" height="39" fill="#fff" stroke="#000" stroke-width="1" />
<line x1="466" y1="1093.5" x2="508" y2="1093.5" stroke="#000080" stroke-width="1.1" />
<rect x="482.2" y="1089.3" width="7.6" height="7.6" fill="#000080" />
<line x1="466" y1="1108.5" x2="508" y2="1108.5" stroke="#ff00ff" stroke-width="1.1" stroke-dasharray="27.600 8 6.400 100"/>
<rect x="482.2" y="1104.3" width="7.6" height="7.6" fill="#ff00ff" />
<text x="513.6" y="1097.7" font-size="11" fill="#000" font-family='"Liberation Sans", sans-serif' textLength="36.4" lengthAdjust="spacingAndGlyphs" >Серии 1</text>
<text x="513.6" y="1111.4" font-size="11" fill="#000" font-family='"Liberation Sans", sans-serif' textLength="36.8" lengthAdjust="spacingAndGlyphs" >Серии 2</text>
<rect x="673.5" y="949.5" width="476" height="302.5" fill="#ffff80" stroke="none" stroke-width="1" fill-opacity="0.5"/>
<rect x="673.5" y="949.5" width="476" height="302.5" fill="none" stroke="#000" stroke-width="1" />
<text x="911" y="968" font-size="11.5" fill="#000" font-family='"Liberation Sans", sans-serif' text-anchor="middle" textLength="138" lengthAdjust="spacingAndGlyphs" >Столбиковая диаграмма</text>
<rect x="696.5" y="985.5" width="448.0" height="224" fill="none" stroke="#505050" stroke-width="1" />
<line x1="690.5" y1="1208.5" x2="696.5" y2="1208.5" stroke="#000" stroke-width="1" />
<text x="688" y="1212.5" font-size="11" fill="#000" font-family='"Liberation Sans", sans-serif' text-anchor="end" >-2</text>
<line x1="696.5" y1="1164.5" x2="1144.5" y2="1164.5" stroke="#505050" stroke-width="1" />
<line x1="690.5" y1="1164.5" x2="696.5" y2="1164.5" stroke="#000" stroke-width="1" />
<text x="688" y="1168.5" font-size="11" fill="#000" font-family='"Liberation Sans", sans-serif' text-anchor="end" >-1</text>
<line x1="690.5" y1="1119.5" x2="696.5" y2="1119.5" stroke="#000" stroke-width="1" />
<text x="688" y="1123.5" font-size="11" fill="#000" font-family='"Liberation Sans", sans-serif' text-anchor="end" >0</text>
<line x1="696.5" y1="1074.5" x2="1144.5" y2="1074.5" stroke="#505050" stroke-width="1" />
<line x1="690.5" y1="1074.5" x2="696.5" y2="1074.5" stroke="#000" stroke-width="1" />
<text x="688" y="1078.5" font-size="11" fill="#000" font-family='"Liberation Sans", sans-serif' text-anchor="end" >1</text>
<line x1="696.5" y1="1030.5" x2="1144.5" y2="1030.5" stroke="#505050" stroke-width="1" />
<line x1="690.5" y1="1030.5" x2="696.5" y2="1030.5" stroke="#000" stroke-width="1" />
<text x="688" y="1034.5" font-size="11" fill="#000" font-family='"Liberation Sans", sans-serif' text-anchor="end" >2</text>
<line x1="690.5" y1="985.5" x2="696.5" y2="985.5" stroke="#000" stroke-width="1" />
<text x="688" y="989.5" font-size="11" fill="#000" font-family='"Liberation Sans", sans-serif' text-anchor="end" >3</text>
<line x1="696.5" y1="985" x2="696.5" y2="1210" stroke="#000" stroke-width="1" />
<rect x="733.5" y="1119.5" width="37" height="45" fill="#008000" stroke="#000" stroke-width="1" />
<rect x="845.5" y="1030.5" width="37" height="89" fill="#008000" stroke="#000" stroke-width="1" />
<rect x="1069.5" y="1052.5" width="37" height="67" fill="#008000" stroke="#000" stroke-width="1" />
<line x1="696.5" y1="1119.5" x2="1144.5" y2="1119.5" stroke="#000" stroke-width="1" />
<line x1="808.5" y1="1119.5" x2="808.5" y2="1125.5" stroke="#000" stroke-width="1" />
<line x1="920.5" y1="1119.5" x2="920.5" y2="1125.5" stroke="#000" stroke-width="1" />
<line x1="1032.5" y1="1119.5" x2="1032.5" y2="1125.5" stroke="#000" stroke-width="1" />
<line x1="1144.5" y1="1119.5" x2="1144.5" y2="1125.5" stroke="#000" stroke-width="1" />
<text x="735.5" y="1138" font-size="10.5" fill="#000" font-family='"Liberation Sans", sans-serif' textLength="34" lengthAdjust="spacingAndGlyphs" >Январь</text>
<text x="844.0" y="1138" font-size="10.5" fill="#000" font-family='"Liberation Sans", sans-serif' textLength="41" lengthAdjust="spacingAndGlyphs" >Февраль</text>
<text x="964.0" y="1138" font-size="10.5" fill="#000" font-family='"Liberation Sans", sans-serif' textLength="25" lengthAdjust="spacingAndGlyphs" >Март</text>
<text x="1071.0" y="1138" font-size="10.5" fill="#000" font-family='"Liberation Sans", sans-serif' textLength="35" lengthAdjust="spacingAndGlyphs" >Апрель</text>
<text x="755.5" y="1137" font-size="10" fill="#000" font-family='"Liberation Sans", sans-serif' text-anchor="middle" >-1</text>
<text x="864.5" y="1046" font-size="10" fill="#000" font-family='"Liberation Sans", sans-serif' text-anchor="middle" >2</text>
<text x="1088.5" y="1068" font-size="10" fill="#000" font-family='"Liberation Sans", sans-serif' text-anchor="middle" >1,5</text>
<rect x="879.5" y="1222.5" width="64" height="23" fill="#fff" stroke="#000" stroke-width="1" />
<rect x="885.5" y="1228.5" width="10" height="10" fill="#008000" stroke="#000" stroke-width="1" />
<text x="900" y="1238" font-size="10.5" fill="#000" font-family='"Liberation Sans", sans-serif' textLength="38" lengthAdjust="spacingAndGlyphs" >Серии 1</text>
</svg></div>
</body></html>
